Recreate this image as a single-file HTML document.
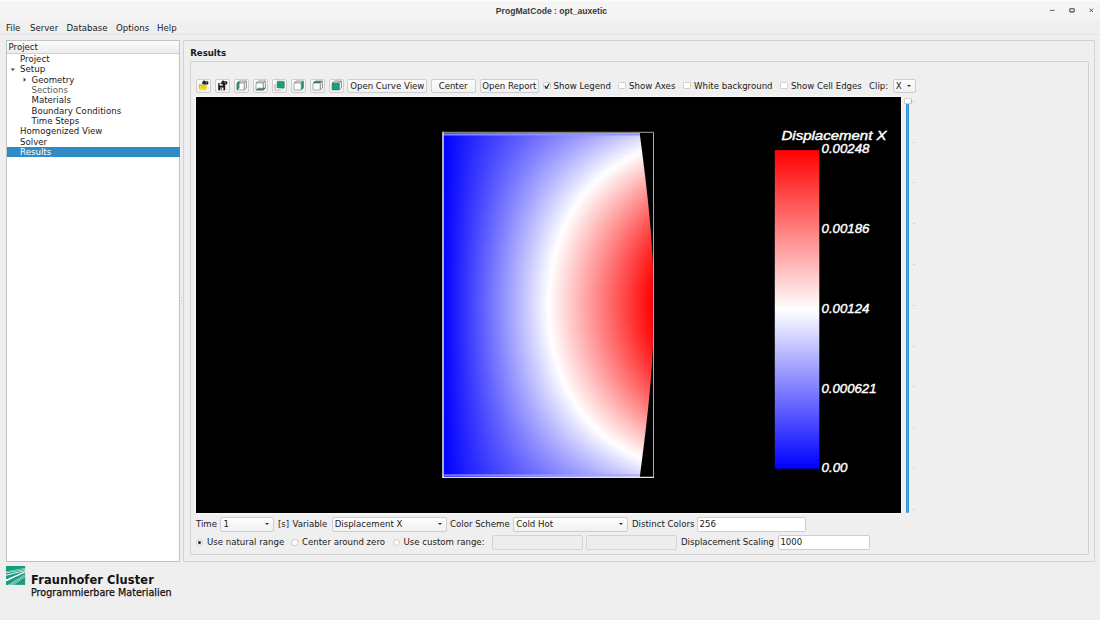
<!DOCTYPE html>
<html><head><meta charset="utf-8"><title>ProgMatCode : opt_auxetic</title>
<style>
*{box-sizing:border-box;margin:0;padding:0}
html,body{width:1100px;height:620px;overflow:hidden;background:#efefef}
body{position:relative;font-family:"DejaVu Sans","Liberation Sans",sans-serif;font-size:8.6px;color:#1a1a1a;line-height:10.33px}
.a{position:absolute;white-space:nowrap}
#titlebar{left:0;top:0;width:1100px;height:21.8px;background:linear-gradient(#fdfdfd 0,#f5f5f5 12%,#f3f3f3);border-bottom:1.8px solid #b4b4b4}
#title{left:1.5px;width:1100px;top:6.1px;text-align:center;font-family:"Liberation Sans","DejaVu Sans",sans-serif;font-weight:bold;font-size:8.6px;color:#3a3a3a}
#menubar{left:0;top:21px;width:1100px;height:13px;background:#efefef}
.m{top:23px}
#tree{left:6px;top:40px;width:174.4px;height:522px;background:#fff;border:1px solid #c2c2c2}
#thead{left:7px;top:41px;width:172px;height:12.5px;background:linear-gradient(#fdfdfd,#ececec);border-bottom:1px solid #cfcfcf}
.t{height:10.33px}
#sel{left:7px;top:146.7px;width:173px;height:10.7px;background:#308cc6}
#rpanel{left:182.7px;top:39.8px;width:912.8px;height:522.6px;border:1px solid #d2d2d2;border-radius:1px}
#gbox{left:189.7px;top:60.8px;width:899.1px;height:494.6px;border:1px solid #d2d2d2;border-radius:1px}
#view{left:195.8px;top:97px;width:705px;height:415.8px;background:#000;box-shadow:0 0 0 1.3px #f9f9f9}
.btn{border:1px solid #cecece;border-radius:2px;background:linear-gradient(#fcfcfc,#f0f0f0);height:13.8px;top:79.2px;text-align:center;line-height:12.7px}
.ib{width:15px;padding:0;line-height:0;overflow:hidden}.ib svg{position:absolute;left:-1px;top:-1px}
.cb{width:7.6px;height:7.8px;border:1px solid #cfcfcf;border-radius:1.5px;background:#fff;top:81.7px}
.lb{top:80.8px}
.combo{border:1px solid #cdcdcd;border-radius:2px;background:linear-gradient(#fdfdfd,#f1f1f1);height:15.1px;line-height:13.3px;padding-left:2.2px}
.inp{border:1px solid #cdcdcd;border-radius:2px;background:#fff;height:15.1px;line-height:13.3px;padding-left:1.2px}
.dis{background:#ededed;border-color:#d4d4d4}
.arr{position:absolute;right:3.6px;top:5.6px;width:0;height:0;border-left:2.7px solid transparent;border-right:2.7px solid transparent;border-top:2.7px solid #2e2e2e}
.rd{width:7.8px;height:7.8px;border:1px solid #c8c8c8;border-radius:50%;background:#fff}
.r1{top:519px}
.r2{top:537.4px}
</style></head><body>
<div class="a" id="titlebar"></div>
<div class="a" id="title">ProgMatCode : opt_auxetic</div>
<!--WB--><svg class="a" style="left:1040px;top:0" width="60" height="21" viewBox="0 0 60 21">
<path d="M9.9 10.4h4.8" stroke="#555" stroke-width=".9" fill="none"/>
<rect x="29.8" y="8.7" width="4.4" height="3.2" rx=".6" fill="none" stroke="#444" stroke-width="1.1"/>
<path d="M49.6 8.6l3.4 3.4M53 8.6l-3.4 3.4" stroke="#444" stroke-width=".9" fill="none"/>
</svg><!--/WB-->
<div class="a" id="menubar"></div>
<div class="a m" style="left:6px">File</div>
<div class="a m" style="left:30px">Server</div>
<div class="a m" style="left:66.5px">Database</div>
<div class="a m" style="left:116px">Options</div>
<div class="a m" style="left:157px">Help</div>

<div class="a" id="tree"></div>
<div class="a" id="thead"></div>
<div class="a" style="left:8.5px;top:42px">Project</div>
<div class="a" id="sel"></div>
<div class="a t" style="left:20.1px;top:54px">Project</div>
<div class="a t" style="left:20.1px;top:64.3px">Setup</div>
<div class="a t" style="left:31.5px;top:74.6px">Geometry</div>
<div class="a t" style="left:31.5px;top:85px;color:#5c5c5c">Sections</div>
<div class="a t" style="left:31.5px;top:95.3px">Materials</div>
<div class="a t" style="left:31.5px;top:105.6px">Boundary Conditions</div>
<div class="a t" style="left:31.5px;top:116px">Time Steps</div>
<div class="a t" style="left:20.1px;top:126.3px">Homogenized View</div>
<div class="a t" style="left:20.1px;top:136.6px">Solver</div>
<div class="a t" style="left:20.1px;top:147px;color:#fff">Results</div>

<!--EXTRA--><div class="a" style="left:0;top:34px;width:1100px;height:1px;background:#e4e4e4"></div>
<svg class="a" style="left:9px;top:65.5px" width="8" height="8" viewBox="0 0 8 8"><path d="M1.6 2.6h4.4L3.8 5z" fill="#444"/></svg>
<svg class="a" style="left:20.6px;top:76px" width="8" height="8" viewBox="0 0 8 8"><path d="M2.6 1.6v4.4L5 3.8z" fill="#444"/></svg>
<div class="a" style="left:181.3px;top:297px;width:1px;height:1px;background:#c4c4c4;box-shadow:0 3px #c4c4c4,0 6px #c4c4c4"></div>
<!--/EXTRA-->
<div class="a" id="rpanel"></div>
<div class="a" style="left:190.2px;top:47.8px;font-weight:bold">Results</div>
<div class="a" id="gbox"></div>
<div class="a" id="view"></div>
<!--VIEW--><svg class="a" style="left:196px;top:97px" width="705" height="416" viewBox="196 97 705 416">
<defs><linearGradient id="g0"><stop offset="0" stop-color="#0000ff"/><stop offset="0.125" stop-color="#2121ff"/><stop offset="0.25" stop-color="#3d3dff"/><stop offset="0.375" stop-color="#5757ff"/><stop offset="0.5" stop-color="#7070ff"/><stop offset="0.625" stop-color="#8989ff"/><stop offset="0.75" stop-color="#a0a0ff"/><stop offset="0.875" stop-color="#b8b8ff"/><stop offset="1" stop-color="#cfcfff"/></linearGradient><linearGradient id="g1"><stop offset="0" stop-color="#0000ff"/><stop offset="0.125" stop-color="#2121ff"/><stop offset="0.25" stop-color="#3e3eff"/><stop offset="0.375" stop-color="#5959ff"/><stop offset="0.5" stop-color="#7373ff"/><stop offset="0.625" stop-color="#8c8cff"/><stop offset="0.75" stop-color="#a4a4ff"/><stop offset="0.875" stop-color="#bdbdff"/><stop offset="1" stop-color="#d4d4ff"/></linearGradient><linearGradient id="g2"><stop offset="0" stop-color="#0000ff"/><stop offset="0.125" stop-color="#2222ff"/><stop offset="0.25" stop-color="#3f3fff"/><stop offset="0.375" stop-color="#5b5bff"/><stop offset="0.5" stop-color="#7575ff"/><stop offset="0.625" stop-color="#8f8fff"/><stop offset="0.75" stop-color="#a9a9ff"/><stop offset="0.875" stop-color="#c1c1ff"/><stop offset="1" stop-color="#dadaff"/></linearGradient><linearGradient id="g3"><stop offset="0" stop-color="#0000ff"/><stop offset="0.125" stop-color="#2323ff"/><stop offset="0.25" stop-color="#4040ff"/><stop offset="0.375" stop-color="#5d5dff"/><stop offset="0.5" stop-color="#7878ff"/><stop offset="0.625" stop-color="#9393ff"/><stop offset="0.75" stop-color="#adadff"/><stop offset="0.875" stop-color="#c6c6ff"/><stop offset="1" stop-color="#e0e0ff"/></linearGradient><linearGradient id="g4"><stop offset="0" stop-color="#0000ff"/><stop offset="0.125" stop-color="#2323ff"/><stop offset="0.25" stop-color="#4141ff"/><stop offset="0.375" stop-color="#5e5eff"/><stop offset="0.5" stop-color="#7a7aff"/><stop offset="0.625" stop-color="#9696ff"/><stop offset="0.75" stop-color="#b1b1ff"/><stop offset="0.875" stop-color="#cbcbff"/><stop offset="1" stop-color="#e5e5ff"/></linearGradient><linearGradient id="g5"><stop offset="0" stop-color="#0000ff"/><stop offset="0.125" stop-color="#2424ff"/><stop offset="0.25" stop-color="#4343ff"/><stop offset="0.375" stop-color="#6060ff"/><stop offset="0.5" stop-color="#7d7dff"/><stop offset="0.625" stop-color="#9999ff"/><stop offset="0.75" stop-color="#b5b5ff"/><stop offset="0.875" stop-color="#d0d0ff"/><stop offset="1" stop-color="#ebebff"/></linearGradient><linearGradient id="g6"><stop offset="0" stop-color="#0000ff"/><stop offset="0.125" stop-color="#2424ff"/><stop offset="0.25" stop-color="#4444ff"/><stop offset="0.375" stop-color="#6262ff"/><stop offset="0.5" stop-color="#8080ff"/><stop offset="0.625" stop-color="#9c9cff"/><stop offset="0.75" stop-color="#b9b9ff"/><stop offset="0.875" stop-color="#d5d5ff"/><stop offset="1" stop-color="#f0f0ff"/></linearGradient><linearGradient id="g7"><stop offset="0" stop-color="#0000ff"/><stop offset="0.125" stop-color="#2525ff"/><stop offset="0.25" stop-color="#4545ff"/><stop offset="0.375" stop-color="#6464ff"/><stop offset="0.5" stop-color="#8282ff"/><stop offset="0.625" stop-color="#a0a0ff"/><stop offset="0.75" stop-color="#bdbdff"/><stop offset="0.875" stop-color="#d9d9ff"/><stop offset="1" stop-color="#f6f6ff"/></linearGradient><linearGradient id="g8"><stop offset="0" stop-color="#0000ff"/><stop offset="0.125" stop-color="#2525ff"/><stop offset="0.25" stop-color="#4646ff"/><stop offset="0.375" stop-color="#6666ff"/><stop offset="0.5" stop-color="#8585ff"/><stop offset="0.625" stop-color="#a3a3ff"/><stop offset="0.75" stop-color="#c1c1ff"/><stop offset="0.875" stop-color="#dedeff"/><stop offset="1" stop-color="#fbfbff"/></linearGradient><linearGradient id="g9"><stop offset="0" stop-color="#0000ff"/><stop offset="0.125" stop-color="#2626ff"/><stop offset="0.25" stop-color="#4747ff"/><stop offset="0.375" stop-color="#6868ff"/><stop offset="0.5" stop-color="#8787ff"/><stop offset="0.625" stop-color="#a6a6ff"/><stop offset="0.75" stop-color="#c5c5ff"/><stop offset="0.875" stop-color="#e3e3ff"/><stop offset="0.9926" stop-color="#ffffff"/><stop offset="1" stop-color="#fffdfd"/></linearGradient><linearGradient id="g10"><stop offset="0" stop-color="#0000ff"/><stop offset="0.125" stop-color="#2626ff"/><stop offset="0.25" stop-color="#4848ff"/><stop offset="0.375" stop-color="#6969ff"/><stop offset="0.5" stop-color="#8a8aff"/><stop offset="0.625" stop-color="#a9a9ff"/><stop offset="0.75" stop-color="#c9c9ff"/><stop offset="0.875" stop-color="#e8e8ff"/><stop offset="0.9703" stop-color="#ffffff"/><stop offset="1" stop-color="#fff8f8"/></linearGradient><linearGradient id="g11"><stop offset="0" stop-color="#0000ff"/><stop offset="0.125" stop-color="#2727ff"/><stop offset="0.25" stop-color="#4a4aff"/><stop offset="0.375" stop-color="#6b6bff"/><stop offset="0.5" stop-color="#8c8cff"/><stop offset="0.625" stop-color="#adadff"/><stop offset="0.75" stop-color="#cdcdff"/><stop offset="0.875" stop-color="#ececff"/><stop offset="0.9492" stop-color="#ffffff"/><stop offset="1" stop-color="#fff2f2"/></linearGradient><linearGradient id="g12"><stop offset="0" stop-color="#0000ff"/><stop offset="0.125" stop-color="#2727ff"/><stop offset="0.25" stop-color="#4b4bff"/><stop offset="0.375" stop-color="#6d6dff"/><stop offset="0.5" stop-color="#8f8fff"/><stop offset="0.625" stop-color="#b0b0ff"/><stop offset="0.75" stop-color="#d1d1ff"/><stop offset="0.875" stop-color="#f1f1ff"/><stop offset="0.9291" stop-color="#ffffff"/><stop offset="1" stop-color="#ffeded"/></linearGradient><linearGradient id="g13"><stop offset="0" stop-color="#0000ff"/><stop offset="0.125" stop-color="#2828ff"/><stop offset="0.25" stop-color="#4c4cff"/><stop offset="0.375" stop-color="#6f6fff"/><stop offset="0.5" stop-color="#9191ff"/><stop offset="0.625" stop-color="#b3b3ff"/><stop offset="0.75" stop-color="#d5d5ff"/><stop offset="0.875" stop-color="#f6f6ff"/><stop offset="0.9101" stop-color="#ffffff"/><stop offset="1" stop-color="#ffe7e7"/></linearGradient><linearGradient id="g14"><stop offset="0" stop-color="#0000ff"/><stop offset="0.125" stop-color="#2828ff"/><stop offset="0.25" stop-color="#4d4dff"/><stop offset="0.375" stop-color="#7171ff"/><stop offset="0.5" stop-color="#9494ff"/><stop offset="0.625" stop-color="#b6b6ff"/><stop offset="0.75" stop-color="#d9d9ff"/><stop offset="0.875" stop-color="#fafaff"/><stop offset="0.8921" stop-color="#ffffff"/><stop offset="1" stop-color="#ffe2e2"/></linearGradient><linearGradient id="g15"><stop offset="0" stop-color="#0000ff"/><stop offset="0.125" stop-color="#2828ff"/><stop offset="0.25" stop-color="#4e4eff"/><stop offset="0.375" stop-color="#7272ff"/><stop offset="0.5" stop-color="#9696ff"/><stop offset="0.625" stop-color="#babaff"/><stop offset="0.75" stop-color="#dcdcff"/><stop offset="0.8749" stop-color="#ffffff"/><stop offset="0.875" stop-color="#ffffff"/><stop offset="1" stop-color="#ffdddd"/></linearGradient><linearGradient id="g16"><stop offset="0" stop-color="#0000ff"/><stop offset="0.125" stop-color="#2929ff"/><stop offset="0.25" stop-color="#4f4fff"/><stop offset="0.375" stop-color="#7474ff"/><stop offset="0.5" stop-color="#9999ff"/><stop offset="0.625" stop-color="#bdbdff"/><stop offset="0.75" stop-color="#e0e0ff"/><stop offset="0.8585" stop-color="#ffffff"/><stop offset="0.875" stop-color="#fffafa"/><stop offset="1" stop-color="#ffd7d7"/></linearGradient><linearGradient id="g17"><stop offset="0" stop-color="#0000ff"/><stop offset="0.125" stop-color="#2929ff"/><stop offset="0.25" stop-color="#5050ff"/><stop offset="0.375" stop-color="#7676ff"/><stop offset="0.5" stop-color="#9b9bff"/><stop offset="0.625" stop-color="#c0c0ff"/><stop offset="0.75" stop-color="#e4e4ff"/><stop offset="0.843" stop-color="#ffffff"/><stop offset="0.875" stop-color="#fff6f6"/><stop offset="1" stop-color="#ffd2d2"/></linearGradient><linearGradient id="g18"><stop offset="0" stop-color="#0000ff"/><stop offset="0.125" stop-color="#2a2aff"/><stop offset="0.25" stop-color="#5151ff"/><stop offset="0.375" stop-color="#7878ff"/><stop offset="0.5" stop-color="#9e9eff"/><stop offset="0.625" stop-color="#c3c3ff"/><stop offset="0.75" stop-color="#e8e8ff"/><stop offset="0.8281" stop-color="#ffffff"/><stop offset="0.875" stop-color="#fff1f1"/><stop offset="1" stop-color="#ffcdcd"/></linearGradient><linearGradient id="g19"><stop offset="0" stop-color="#0000ff"/><stop offset="0.125" stop-color="#2a2aff"/><stop offset="0.25" stop-color="#5252ff"/><stop offset="0.375" stop-color="#7979ff"/><stop offset="0.5" stop-color="#a0a0ff"/><stop offset="0.625" stop-color="#c6c6ff"/><stop offset="0.75" stop-color="#ececff"/><stop offset="0.8139" stop-color="#ffffff"/><stop offset="0.875" stop-color="#ffeded"/><stop offset="1" stop-color="#ffc7c7"/></linearGradient><linearGradient id="g20"><stop offset="0" stop-color="#0000ff"/><stop offset="0.125" stop-color="#2b2bff"/><stop offset="0.25" stop-color="#5353ff"/><stop offset="0.375" stop-color="#7b7bff"/><stop offset="0.5" stop-color="#a2a2ff"/><stop offset="0.625" stop-color="#c9c9ff"/><stop offset="0.75" stop-color="#f0f0ff"/><stop offset="0.8003" stop-color="#ffffff"/><stop offset="0.875" stop-color="#ffe8e8"/><stop offset="1" stop-color="#ffc2c2"/></linearGradient><linearGradient id="g21"><stop offset="0" stop-color="#0000ff"/><stop offset="0.125" stop-color="#2b2bff"/><stop offset="0.25" stop-color="#5555ff"/><stop offset="0.375" stop-color="#7d7dff"/><stop offset="0.5" stop-color="#a5a5ff"/><stop offset="0.625" stop-color="#ccccff"/><stop offset="0.75" stop-color="#f3f3ff"/><stop offset="0.7873" stop-color="#ffffff"/><stop offset="0.875" stop-color="#ffe4e4"/><stop offset="1" stop-color="#ffbdbd"/></linearGradient><linearGradient id="g22"><stop offset="0" stop-color="#0000ff"/><stop offset="0.125" stop-color="#2c2cff"/><stop offset="0.25" stop-color="#5656ff"/><stop offset="0.375" stop-color="#7f7fff"/><stop offset="0.5" stop-color="#a7a7ff"/><stop offset="0.625" stop-color="#cfcfff"/><stop offset="0.75" stop-color="#f7f7ff"/><stop offset="0.7749" stop-color="#ffffff"/><stop offset="0.875" stop-color="#ffdfdf"/><stop offset="1" stop-color="#ffb8b8"/></linearGradient><linearGradient id="g23"><stop offset="0" stop-color="#0000ff"/><stop offset="0.125" stop-color="#2c2cff"/><stop offset="0.25" stop-color="#5757ff"/><stop offset="0.375" stop-color="#8080ff"/><stop offset="0.5" stop-color="#a9a9ff"/><stop offset="0.625" stop-color="#d2d2ff"/><stop offset="0.75" stop-color="#fbfbff"/><stop offset="0.763" stop-color="#ffffff"/><stop offset="0.875" stop-color="#ffdbdb"/><stop offset="1" stop-color="#ffb3b3"/></linearGradient><linearGradient id="g24"><stop offset="0" stop-color="#0000ff"/><stop offset="0.125" stop-color="#2d2dff"/><stop offset="0.25" stop-color="#5858ff"/><stop offset="0.375" stop-color="#8282ff"/><stop offset="0.5" stop-color="#acacff"/><stop offset="0.625" stop-color="#d5d5ff"/><stop offset="0.75" stop-color="#fefeff"/><stop offset="0.7516" stop-color="#ffffff"/><stop offset="0.875" stop-color="#ffd7d7"/><stop offset="1" stop-color="#ffaeae"/></linearGradient><linearGradient id="g25"><stop offset="0" stop-color="#0000ff"/><stop offset="0.125" stop-color="#2d2dff"/><stop offset="0.25" stop-color="#5959ff"/><stop offset="0.375" stop-color="#8484ff"/><stop offset="0.5" stop-color="#aeaeff"/><stop offset="0.625" stop-color="#d8d8ff"/><stop offset="0.7407" stop-color="#ffffff"/><stop offset="0.75" stop-color="#fffcfc"/><stop offset="0.875" stop-color="#ffd2d2"/><stop offset="1" stop-color="#ffa9a9"/></linearGradient><linearGradient id="g26"><stop offset="0" stop-color="#0000ff"/><stop offset="0.125" stop-color="#2e2eff"/><stop offset="0.25" stop-color="#5a5aff"/><stop offset="0.375" stop-color="#8585ff"/><stop offset="0.5" stop-color="#b0b0ff"/><stop offset="0.625" stop-color="#dbdbff"/><stop offset="0.7302" stop-color="#ffffff"/><stop offset="0.75" stop-color="#fff8f8"/><stop offset="0.875" stop-color="#ffcece"/><stop offset="1" stop-color="#ffa4a4"/></linearGradient><linearGradient id="g27"><stop offset="0" stop-color="#0000ff"/><stop offset="0.125" stop-color="#2e2eff"/><stop offset="0.25" stop-color="#5b5bff"/><stop offset="0.375" stop-color="#8787ff"/><stop offset="0.5" stop-color="#b3b3ff"/><stop offset="0.625" stop-color="#dedeff"/><stop offset="0.7201" stop-color="#ffffff"/><stop offset="0.75" stop-color="#fff5f5"/><stop offset="0.875" stop-color="#ffcaca"/><stop offset="1" stop-color="#ff9f9f"/></linearGradient><linearGradient id="g28"><stop offset="0" stop-color="#0000ff"/><stop offset="0.125" stop-color="#2f2fff"/><stop offset="0.25" stop-color="#5c5cff"/><stop offset="0.375" stop-color="#8989ff"/><stop offset="0.5" stop-color="#b5b5ff"/><stop offset="0.625" stop-color="#e1e1ff"/><stop offset="0.7104" stop-color="#ffffff"/><stop offset="0.75" stop-color="#fff1f1"/><stop offset="0.875" stop-color="#ffc6c6"/><stop offset="1" stop-color="#ff9a9a"/></linearGradient><linearGradient id="g29"><stop offset="0" stop-color="#0000ff"/><stop offset="0.125" stop-color="#2f2fff"/><stop offset="0.25" stop-color="#5d5dff"/><stop offset="0.375" stop-color="#8a8aff"/><stop offset="0.5" stop-color="#b7b7ff"/><stop offset="0.625" stop-color="#e4e4ff"/><stop offset="0.7011" stop-color="#ffffff"/><stop offset="0.75" stop-color="#ffeeee"/><stop offset="0.875" stop-color="#ffc1c1"/><stop offset="1" stop-color="#ff9595"/></linearGradient><linearGradient id="g30"><stop offset="0" stop-color="#0000ff"/><stop offset="0.125" stop-color="#3030ff"/><stop offset="0.25" stop-color="#5e5eff"/><stop offset="0.375" stop-color="#8c8cff"/><stop offset="0.5" stop-color="#b9b9ff"/><stop offset="0.625" stop-color="#e7e7ff"/><stop offset="0.6922" stop-color="#ffffff"/><stop offset="0.75" stop-color="#ffeaea"/><stop offset="0.875" stop-color="#ffbdbd"/><stop offset="1" stop-color="#ff9090"/></linearGradient><linearGradient id="g31"><stop offset="0" stop-color="#0000ff"/><stop offset="0.125" stop-color="#3030ff"/><stop offset="0.25" stop-color="#5f5fff"/><stop offset="0.375" stop-color="#8e8eff"/><stop offset="0.5" stop-color="#bcbcff"/><stop offset="0.625" stop-color="#eaeaff"/><stop offset="0.6836" stop-color="#ffffff"/><stop offset="0.75" stop-color="#ffe7e7"/><stop offset="0.875" stop-color="#ffb9b9"/><stop offset="1" stop-color="#ff8c8c"/></linearGradient><linearGradient id="g32"><stop offset="0" stop-color="#0000ff"/><stop offset="0.125" stop-color="#3131ff"/><stop offset="0.25" stop-color="#6060ff"/><stop offset="0.375" stop-color="#8f8fff"/><stop offset="0.5" stop-color="#bebeff"/><stop offset="0.625" stop-color="#ececff"/><stop offset="0.6753" stop-color="#ffffff"/><stop offset="0.75" stop-color="#ffe3e3"/><stop offset="0.875" stop-color="#ffb5b5"/><stop offset="1" stop-color="#ff8787"/></linearGradient><linearGradient id="g33"><stop offset="0" stop-color="#0000ff"/><stop offset="0.125" stop-color="#3131ff"/><stop offset="0.25" stop-color="#6161ff"/><stop offset="0.375" stop-color="#9191ff"/><stop offset="0.5" stop-color="#c0c0ff"/><stop offset="0.625" stop-color="#efefff"/><stop offset="0.6673" stop-color="#ffffff"/><stop offset="0.75" stop-color="#ffe0e0"/><stop offset="0.875" stop-color="#ffb1b1"/><stop offset="1" stop-color="#ff8282"/></linearGradient><linearGradient id="g34"><stop offset="0" stop-color="#0000ff"/><stop offset="0.125" stop-color="#3232ff"/><stop offset="0.25" stop-color="#6262ff"/><stop offset="0.375" stop-color="#9292ff"/><stop offset="0.5" stop-color="#c2c2ff"/><stop offset="0.625" stop-color="#f2f2ff"/><stop offset="0.6596" stop-color="#ffffff"/><stop offset="0.75" stop-color="#ffdddd"/><stop offset="0.875" stop-color="#ffadad"/><stop offset="1" stop-color="#ff7e7e"/></linearGradient><linearGradient id="g35"><stop offset="0" stop-color="#0000ff"/><stop offset="0.125" stop-color="#3232ff"/><stop offset="0.25" stop-color="#6363ff"/><stop offset="0.375" stop-color="#9494ff"/><stop offset="0.5" stop-color="#c4c4ff"/><stop offset="0.625" stop-color="#f4f4ff"/><stop offset="0.6522" stop-color="#ffffff"/><stop offset="0.75" stop-color="#ffd9d9"/><stop offset="0.875" stop-color="#ffa9a9"/><stop offset="1" stop-color="#ff7979"/></linearGradient><linearGradient id="g36"><stop offset="0" stop-color="#0000ff"/><stop offset="0.125" stop-color="#3232ff"/><stop offset="0.25" stop-color="#6464ff"/><stop offset="0.375" stop-color="#9595ff"/><stop offset="0.5" stop-color="#c6c6ff"/><stop offset="0.625" stop-color="#f7f7ff"/><stop offset="0.6451" stop-color="#ffffff"/><stop offset="0.75" stop-color="#ffd6d6"/><stop offset="0.875" stop-color="#ffa6a6"/><stop offset="1" stop-color="#ff7575"/></linearGradient><linearGradient id="g37"><stop offset="0" stop-color="#0000ff"/><stop offset="0.125" stop-color="#3333ff"/><stop offset="0.25" stop-color="#6565ff"/><stop offset="0.375" stop-color="#9797ff"/><stop offset="0.5" stop-color="#c8c8ff"/><stop offset="0.625" stop-color="#fafaff"/><stop offset="0.6383" stop-color="#ffffff"/><stop offset="0.75" stop-color="#ffd3d3"/><stop offset="0.875" stop-color="#ffa2a2"/><stop offset="1" stop-color="#ff7171"/></linearGradient><linearGradient id="g38"><stop offset="0" stop-color="#0000ff"/><stop offset="0.125" stop-color="#3333ff"/><stop offset="0.25" stop-color="#6666ff"/><stop offset="0.375" stop-color="#9898ff"/><stop offset="0.5" stop-color="#cacaff"/><stop offset="0.625" stop-color="#fcfcff"/><stop offset="0.6316" stop-color="#ffffff"/><stop offset="0.75" stop-color="#ffd0d0"/><stop offset="0.875" stop-color="#ff9e9e"/><stop offset="1" stop-color="#ff6c6c"/></linearGradient><linearGradient id="g39"><stop offset="0" stop-color="#0000ff"/><stop offset="0.125" stop-color="#3434ff"/><stop offset="0.25" stop-color="#6767ff"/><stop offset="0.375" stop-color="#9a9aff"/><stop offset="0.5" stop-color="#ccccff"/><stop offset="0.625" stop-color="#ffffff"/><stop offset="0.6252" stop-color="#ffffff"/><stop offset="0.75" stop-color="#ffcdcd"/><stop offset="0.875" stop-color="#ff9a9a"/><stop offset="1" stop-color="#ff6868"/></linearGradient><linearGradient id="g40"><stop offset="0" stop-color="#0000ff"/><stop offset="0.125" stop-color="#3434ff"/><stop offset="0.25" stop-color="#6868ff"/><stop offset="0.375" stop-color="#9b9bff"/><stop offset="0.5" stop-color="#ceceff"/><stop offset="0.6191" stop-color="#ffffff"/><stop offset="0.625" stop-color="#fffdfd"/><stop offset="0.75" stop-color="#ffcaca"/><stop offset="0.875" stop-color="#ff9797"/><stop offset="1" stop-color="#ff6464"/></linearGradient><linearGradient id="g41"><stop offset="0" stop-color="#0000ff"/><stop offset="0.125" stop-color="#3535ff"/><stop offset="0.25" stop-color="#6969ff"/><stop offset="0.375" stop-color="#9d9dff"/><stop offset="0.5" stop-color="#d0d0ff"/><stop offset="0.6132" stop-color="#ffffff"/><stop offset="0.625" stop-color="#fffafa"/><stop offset="0.75" stop-color="#ffc7c7"/><stop offset="0.875" stop-color="#ff9393"/><stop offset="1" stop-color="#ff6060"/></linearGradient><linearGradient id="g42"><stop offset="0" stop-color="#0000ff"/><stop offset="0.125" stop-color="#3535ff"/><stop offset="0.25" stop-color="#6a6aff"/><stop offset="0.375" stop-color="#9e9eff"/><stop offset="0.5" stop-color="#d2d2ff"/><stop offset="0.6074" stop-color="#ffffff"/><stop offset="0.625" stop-color="#fff8f8"/><stop offset="0.75" stop-color="#ffc4c4"/><stop offset="0.875" stop-color="#ff9090"/><stop offset="1" stop-color="#ff5c5c"/></linearGradient><linearGradient id="g43"><stop offset="0" stop-color="#0000ff"/><stop offset="0.125" stop-color="#3636ff"/><stop offset="0.25" stop-color="#6b6bff"/><stop offset="0.375" stop-color="#9f9fff"/><stop offset="0.5" stop-color="#d4d4ff"/><stop offset="0.6019" stop-color="#ffffff"/><stop offset="0.625" stop-color="#fff5f5"/><stop offset="0.75" stop-color="#ffc1c1"/><stop offset="0.875" stop-color="#ff8c8c"/><stop offset="1" stop-color="#ff5858"/></linearGradient><linearGradient id="g44"><stop offset="0" stop-color="#0000ff"/><stop offset="0.125" stop-color="#3636ff"/><stop offset="0.25" stop-color="#6b6bff"/><stop offset="0.375" stop-color="#a1a1ff"/><stop offset="0.5" stop-color="#d6d6ff"/><stop offset="0.5966" stop-color="#ffffff"/><stop offset="0.625" stop-color="#fff3f3"/><stop offset="0.75" stop-color="#ffbebe"/><stop offset="0.875" stop-color="#ff8989"/><stop offset="1" stop-color="#ff5454"/></linearGradient><linearGradient id="g45"><stop offset="0" stop-color="#0000ff"/><stop offset="0.125" stop-color="#3636ff"/><stop offset="0.25" stop-color="#6c6cff"/><stop offset="0.375" stop-color="#a2a2ff"/><stop offset="0.5" stop-color="#d8d8ff"/><stop offset="0.5915" stop-color="#ffffff"/><stop offset="0.625" stop-color="#fff1f1"/><stop offset="0.75" stop-color="#ffbbbb"/><stop offset="0.875" stop-color="#ff8686"/><stop offset="1" stop-color="#ff5050"/></linearGradient><linearGradient id="g46"><stop offset="0" stop-color="#0000ff"/><stop offset="0.125" stop-color="#3737ff"/><stop offset="0.25" stop-color="#6d6dff"/><stop offset="0.375" stop-color="#a3a3ff"/><stop offset="0.5" stop-color="#dadaff"/><stop offset="0.5865" stop-color="#ffffff"/><stop offset="0.625" stop-color="#ffeeee"/><stop offset="0.75" stop-color="#ffb8b8"/><stop offset="0.875" stop-color="#ff8282"/><stop offset="1" stop-color="#ff4c4c"/></linearGradient><linearGradient id="g47"><stop offset="0" stop-color="#0000ff"/><stop offset="0.125" stop-color="#3737ff"/><stop offset="0.25" stop-color="#6e6eff"/><stop offset="0.375" stop-color="#a5a5ff"/><stop offset="0.5" stop-color="#dbdbff"/><stop offset="0.5818" stop-color="#ffffff"/><stop offset="0.625" stop-color="#ffecec"/><stop offset="0.75" stop-color="#ffb6b6"/><stop offset="0.875" stop-color="#ff7f7f"/><stop offset="1" stop-color="#ff4949"/></linearGradient><linearGradient id="g48"><stop offset="0" stop-color="#0000ff"/><stop offset="0.125" stop-color="#3838ff"/><stop offset="0.25" stop-color="#6f6fff"/><stop offset="0.375" stop-color="#a6a6ff"/><stop offset="0.5" stop-color="#ddddff"/><stop offset="0.5772" stop-color="#ffffff"/><stop offset="0.625" stop-color="#ffeaea"/><stop offset="0.75" stop-color="#ffb3b3"/><stop offset="0.875" stop-color="#ff7c7c"/><stop offset="1" stop-color="#ff4545"/></linearGradient><linearGradient id="g49"><stop offset="0" stop-color="#0000ff"/><stop offset="0.125" stop-color="#3838ff"/><stop offset="0.25" stop-color="#7070ff"/><stop offset="0.375" stop-color="#a7a7ff"/><stop offset="0.5" stop-color="#dfdfff"/><stop offset="0.5728" stop-color="#ffffff"/><stop offset="0.625" stop-color="#ffe8e8"/><stop offset="0.75" stop-color="#ffb0b0"/><stop offset="0.875" stop-color="#ff7979"/><stop offset="1" stop-color="#ff4242"/></linearGradient><linearGradient id="g50"><stop offset="0" stop-color="#0000ff"/><stop offset="0.125" stop-color="#3838ff"/><stop offset="0.25" stop-color="#7070ff"/><stop offset="0.375" stop-color="#a8a8ff"/><stop offset="0.5" stop-color="#e0e0ff"/><stop offset="0.5685" stop-color="#ffffff"/><stop offset="0.625" stop-color="#ffe6e6"/><stop offset="0.75" stop-color="#ffaeae"/><stop offset="0.875" stop-color="#ff7676"/><stop offset="1" stop-color="#ff3e3e"/></linearGradient><linearGradient id="g51"><stop offset="0" stop-color="#0000ff"/><stop offset="0.125" stop-color="#3939ff"/><stop offset="0.25" stop-color="#7171ff"/><stop offset="0.375" stop-color="#aaaaff"/><stop offset="0.5" stop-color="#e2e2ff"/><stop offset="0.5644" stop-color="#ffffff"/><stop offset="0.625" stop-color="#ffe4e4"/><stop offset="0.75" stop-color="#ffabab"/><stop offset="0.875" stop-color="#ff7373"/><stop offset="1" stop-color="#ff3b3b"/></linearGradient><linearGradient id="g52"><stop offset="0" stop-color="#0000ff"/><stop offset="0.125" stop-color="#3939ff"/><stop offset="0.25" stop-color="#7272ff"/><stop offset="0.375" stop-color="#ababff"/><stop offset="0.5" stop-color="#e4e4ff"/><stop offset="0.5605" stop-color="#ffffff"/><stop offset="0.625" stop-color="#ffe2e2"/><stop offset="0.75" stop-color="#ffa9a9"/><stop offset="0.875" stop-color="#ff7070"/><stop offset="1" stop-color="#ff3838"/></linearGradient><linearGradient id="g53"><stop offset="0" stop-color="#0000ff"/><stop offset="0.125" stop-color="#3939ff"/><stop offset="0.25" stop-color="#7373ff"/><stop offset="0.375" stop-color="#acacff"/><stop offset="0.5" stop-color="#e5e5ff"/><stop offset="0.5567" stop-color="#ffffff"/><stop offset="0.625" stop-color="#ffe0e0"/><stop offset="0.75" stop-color="#ffa7a7"/><stop offset="0.875" stop-color="#ff6e6e"/><stop offset="1" stop-color="#ff3535"/></linearGradient><linearGradient id="g54"><stop offset="0" stop-color="#0000ff"/><stop offset="0.125" stop-color="#3a3aff"/><stop offset="0.25" stop-color="#7373ff"/><stop offset="0.375" stop-color="#adadff"/><stop offset="0.5" stop-color="#e7e7ff"/><stop offset="0.553" stop-color="#ffffff"/><stop offset="0.625" stop-color="#ffdede"/><stop offset="0.75" stop-color="#ffa4a4"/><stop offset="0.875" stop-color="#ff6b6b"/><stop offset="1" stop-color="#ff3232"/></linearGradient><linearGradient id="g55"><stop offset="0" stop-color="#0000ff"/><stop offset="0.125" stop-color="#3a3aff"/><stop offset="0.25" stop-color="#7474ff"/><stop offset="0.375" stop-color="#aeaeff"/><stop offset="0.5" stop-color="#e8e8ff"/><stop offset="0.5495" stop-color="#ffffff"/><stop offset="0.625" stop-color="#ffdcdc"/><stop offset="0.75" stop-color="#ffa2a2"/><stop offset="0.875" stop-color="#ff6868"/><stop offset="1" stop-color="#ff2f2f"/></linearGradient><linearGradient id="g56"><stop offset="0" stop-color="#0000ff"/><stop offset="0.125" stop-color="#3b3bff"/><stop offset="0.25" stop-color="#7575ff"/><stop offset="0.375" stop-color="#afafff"/><stop offset="0.5" stop-color="#e9e9ff"/><stop offset="0.5462" stop-color="#ffffff"/><stop offset="0.625" stop-color="#ffdada"/><stop offset="0.75" stop-color="#ffa0a0"/><stop offset="0.875" stop-color="#ff6666"/><stop offset="1" stop-color="#ff2c2c"/></linearGradient><linearGradient id="g57"><stop offset="0" stop-color="#0000ff"/><stop offset="0.125" stop-color="#3b3bff"/><stop offset="0.25" stop-color="#7676ff"/><stop offset="0.375" stop-color="#b0b0ff"/><stop offset="0.5" stop-color="#ebebff"/><stop offset="0.543" stop-color="#ffffff"/><stop offset="0.625" stop-color="#ffd9d9"/><stop offset="0.75" stop-color="#ff9e9e"/><stop offset="0.875" stop-color="#ff6363"/><stop offset="1" stop-color="#ff2929"/></linearGradient><linearGradient id="g58"><stop offset="0" stop-color="#0000ff"/><stop offset="0.125" stop-color="#3b3bff"/><stop offset="0.25" stop-color="#7676ff"/><stop offset="0.375" stop-color="#b1b1ff"/><stop offset="0.5" stop-color="#ececff"/><stop offset="0.5399" stop-color="#ffffff"/><stop offset="0.625" stop-color="#ffd7d7"/><stop offset="0.75" stop-color="#ff9c9c"/><stop offset="0.875" stop-color="#ff6161"/><stop offset="1" stop-color="#ff2626"/></linearGradient><linearGradient id="g59"><stop offset="0" stop-color="#0000ff"/><stop offset="0.125" stop-color="#3b3bff"/><stop offset="0.25" stop-color="#7777ff"/><stop offset="0.375" stop-color="#b2b2ff"/><stop offset="0.5" stop-color="#ededff"/><stop offset="0.5369" stop-color="#ffffff"/><stop offset="0.625" stop-color="#ffd5d5"/><stop offset="0.75" stop-color="#ff9a9a"/><stop offset="0.875" stop-color="#ff5f5f"/><stop offset="1" stop-color="#ff2323"/></linearGradient><linearGradient id="g60"><stop offset="0" stop-color="#0000ff"/><stop offset="0.125" stop-color="#3c3cff"/><stop offset="0.25" stop-color="#7777ff"/><stop offset="0.375" stop-color="#b3b3ff"/><stop offset="0.5" stop-color="#efefff"/><stop offset="0.5341" stop-color="#ffffff"/><stop offset="0.625" stop-color="#ffd4d4"/><stop offset="0.75" stop-color="#ff9898"/><stop offset="0.875" stop-color="#ff5c5c"/><stop offset="1" stop-color="#ff2121"/></linearGradient><linearGradient id="g61"><stop offset="0" stop-color="#0000ff"/><stop offset="0.125" stop-color="#3c3cff"/><stop offset="0.25" stop-color="#7878ff"/><stop offset="0.375" stop-color="#b4b4ff"/><stop offset="0.5" stop-color="#f0f0ff"/><stop offset="0.5314" stop-color="#ffffff"/><stop offset="0.625" stop-color="#ffd2d2"/><stop offset="0.75" stop-color="#ff9696"/><stop offset="0.875" stop-color="#ff5a5a"/><stop offset="1" stop-color="#ff1e1e"/></linearGradient><linearGradient id="g62"><stop offset="0" stop-color="#0000ff"/><stop offset="0.125" stop-color="#3c3cff"/><stop offset="0.25" stop-color="#7979ff"/><stop offset="0.375" stop-color="#b5b5ff"/><stop offset="0.5" stop-color="#f1f1ff"/><stop offset="0.5288" stop-color="#ffffff"/><stop offset="0.625" stop-color="#ffd1d1"/><stop offset="0.75" stop-color="#ff9494"/><stop offset="0.875" stop-color="#ff5858"/><stop offset="1" stop-color="#ff1c1c"/></linearGradient><linearGradient id="g63"><stop offset="0" stop-color="#0000ff"/><stop offset="0.125" stop-color="#3d3dff"/><stop offset="0.25" stop-color="#7979ff"/><stop offset="0.375" stop-color="#b6b6ff"/><stop offset="0.5" stop-color="#f2f2ff"/><stop offset="0.5263" stop-color="#ffffff"/><stop offset="0.625" stop-color="#ffcfcf"/><stop offset="0.75" stop-color="#ff9393"/><stop offset="0.875" stop-color="#ff5656"/><stop offset="1" stop-color="#ff1a1a"/></linearGradient><linearGradient id="g64"><stop offset="0" stop-color="#0000ff"/><stop offset="0.125" stop-color="#3d3dff"/><stop offset="0.25" stop-color="#7a7aff"/><stop offset="0.375" stop-color="#b7b7ff"/><stop offset="0.5" stop-color="#f3f3ff"/><stop offset="0.524" stop-color="#ffffff"/><stop offset="0.625" stop-color="#ffcece"/><stop offset="0.75" stop-color="#ff9191"/><stop offset="0.875" stop-color="#ff5454"/><stop offset="1" stop-color="#ff1717"/></linearGradient><linearGradient id="g65"><stop offset="0" stop-color="#0000ff"/><stop offset="0.125" stop-color="#3d3dff"/><stop offset="0.25" stop-color="#7a7aff"/><stop offset="0.375" stop-color="#b7b7ff"/><stop offset="0.5" stop-color="#f4f4ff"/><stop offset="0.5218" stop-color="#ffffff"/><stop offset="0.625" stop-color="#ffcdcd"/><stop offset="0.75" stop-color="#ff9090"/><stop offset="0.875" stop-color="#ff5252"/><stop offset="1" stop-color="#ff1515"/></linearGradient><linearGradient id="g66"><stop offset="0" stop-color="#0000ff"/><stop offset="0.125" stop-color="#3d3dff"/><stop offset="0.25" stop-color="#7b7bff"/><stop offset="0.375" stop-color="#b8b8ff"/><stop offset="0.5" stop-color="#f5f5ff"/><stop offset="0.5197" stop-color="#ffffff"/><stop offset="0.625" stop-color="#ffcbcb"/><stop offset="0.75" stop-color="#ff8e8e"/><stop offset="0.875" stop-color="#ff5151"/><stop offset="1" stop-color="#ff1313"/></linearGradient><linearGradient id="g67"><stop offset="0" stop-color="#0000ff"/><stop offset="0.125" stop-color="#3e3eff"/><stop offset="0.25" stop-color="#7b7bff"/><stop offset="0.375" stop-color="#b9b9ff"/><stop offset="0.5" stop-color="#f6f6ff"/><stop offset="0.5177" stop-color="#ffffff"/><stop offset="0.625" stop-color="#ffcaca"/><stop offset="0.75" stop-color="#ff8d8d"/><stop offset="0.875" stop-color="#ff4f4f"/><stop offset="1" stop-color="#ff1111"/></linearGradient><linearGradient id="g68"><stop offset="0" stop-color="#0000ff"/><stop offset="0.125" stop-color="#3e3eff"/><stop offset="0.25" stop-color="#7c7cff"/><stop offset="0.375" stop-color="#b9b9ff"/><stop offset="0.5" stop-color="#f7f7ff"/><stop offset="0.5158" stop-color="#ffffff"/><stop offset="0.625" stop-color="#ffc9c9"/><stop offset="0.75" stop-color="#ff8b8b"/><stop offset="0.875" stop-color="#ff4d4d"/><stop offset="1" stop-color="#ff1010"/></linearGradient><linearGradient id="g69"><stop offset="0" stop-color="#0000ff"/><stop offset="0.125" stop-color="#3e3eff"/><stop offset="0.25" stop-color="#7c7cff"/><stop offset="0.375" stop-color="#babaff"/><stop offset="0.5" stop-color="#f8f8ff"/><stop offset="0.514" stop-color="#ffffff"/><stop offset="0.625" stop-color="#ffc8c8"/><stop offset="0.75" stop-color="#ff8a8a"/><stop offset="0.875" stop-color="#ff4c4c"/><stop offset="1" stop-color="#ff0e0e"/></linearGradient><linearGradient id="g70"><stop offset="0" stop-color="#0000ff"/><stop offset="0.125" stop-color="#3e3eff"/><stop offset="0.25" stop-color="#7c7cff"/><stop offset="0.375" stop-color="#bbbbff"/><stop offset="0.5" stop-color="#f9f9ff"/><stop offset="0.5124" stop-color="#ffffff"/><stop offset="0.625" stop-color="#ffc7c7"/><stop offset="0.75" stop-color="#ff8989"/><stop offset="0.875" stop-color="#ff4b4b"/><stop offset="1" stop-color="#ff0c0c"/></linearGradient><linearGradient id="g71"><stop offset="0" stop-color="#0000ff"/><stop offset="0.125" stop-color="#3e3eff"/><stop offset="0.25" stop-color="#7d7dff"/><stop offset="0.375" stop-color="#bbbbff"/><stop offset="0.5" stop-color="#fafaff"/><stop offset="0.5108" stop-color="#ffffff"/><stop offset="0.625" stop-color="#ffc6c6"/><stop offset="0.75" stop-color="#ff8888"/><stop offset="0.875" stop-color="#ff4949"/><stop offset="1" stop-color="#ff0b0b"/></linearGradient><linearGradient id="g72"><stop offset="0" stop-color="#0000ff"/><stop offset="0.125" stop-color="#3f3fff"/><stop offset="0.25" stop-color="#7d7dff"/><stop offset="0.375" stop-color="#bcbcff"/><stop offset="0.5" stop-color="#fafaff"/><stop offset="0.5094" stop-color="#ffffff"/><stop offset="0.625" stop-color="#ffc5c5"/><stop offset="0.75" stop-color="#ff8787"/><stop offset="0.875" stop-color="#ff4848"/><stop offset="1" stop-color="#ff0909"/></linearGradient><linearGradient id="g73"><stop offset="0" stop-color="#0000ff"/><stop offset="0.125" stop-color="#3f3fff"/><stop offset="0.25" stop-color="#7d7dff"/><stop offset="0.375" stop-color="#bcbcff"/><stop offset="0.5" stop-color="#fbfbff"/><stop offset="0.508" stop-color="#ffffff"/><stop offset="0.625" stop-color="#ffc4c4"/><stop offset="0.75" stop-color="#ff8686"/><stop offset="0.875" stop-color="#ff4747"/><stop offset="1" stop-color="#ff0808"/></linearGradient><linearGradient id="g74"><stop offset="0" stop-color="#0000ff"/><stop offset="0.125" stop-color="#3f3fff"/><stop offset="0.25" stop-color="#7e7eff"/><stop offset="0.375" stop-color="#bdbdff"/><stop offset="0.5" stop-color="#fcfcff"/><stop offset="0.5068" stop-color="#ffffff"/><stop offset="0.625" stop-color="#ffc4c4"/><stop offset="0.75" stop-color="#ff8585"/><stop offset="0.875" stop-color="#ff4646"/><stop offset="1" stop-color="#ff0707"/></linearGradient><linearGradient id="g75"><stop offset="0" stop-color="#0000ff"/><stop offset="0.125" stop-color="#3f3fff"/><stop offset="0.25" stop-color="#7e7eff"/><stop offset="0.375" stop-color="#bdbdff"/><stop offset="0.5" stop-color="#fcfcff"/><stop offset="0.5057" stop-color="#ffffff"/><stop offset="0.625" stop-color="#ffc3c3"/><stop offset="0.75" stop-color="#ff8484"/><stop offset="0.875" stop-color="#ff4545"/><stop offset="1" stop-color="#ff0606"/></linearGradient><linearGradient id="g76"><stop offset="0" stop-color="#0000ff"/><stop offset="0.125" stop-color="#3f3fff"/><stop offset="0.25" stop-color="#7e7eff"/><stop offset="0.375" stop-color="#bdbdff"/><stop offset="0.5" stop-color="#fdfdff"/><stop offset="0.5046" stop-color="#ffffff"/><stop offset="0.625" stop-color="#ffc2c2"/><stop offset="0.75" stop-color="#ff8383"/><stop offset="0.875" stop-color="#ff4444"/><stop offset="1" stop-color="#ff0505"/></linearGradient><linearGradient id="g77"><stop offset="0" stop-color="#0000ff"/><stop offset="0.125" stop-color="#3f3fff"/><stop offset="0.25" stop-color="#7f7fff"/><stop offset="0.375" stop-color="#bebeff"/><stop offset="0.5" stop-color="#fdfdff"/><stop offset="0.5037" stop-color="#ffffff"/><stop offset="0.625" stop-color="#ffc2c2"/><stop offset="0.75" stop-color="#ff8282"/><stop offset="0.875" stop-color="#ff4343"/><stop offset="1" stop-color="#ff0404"/></linearGradient><linearGradient id="g78"><stop offset="0" stop-color="#0000ff"/><stop offset="0.125" stop-color="#3f3fff"/><stop offset="0.25" stop-color="#7f7fff"/><stop offset="0.375" stop-color="#bebeff"/><stop offset="0.5" stop-color="#fefeff"/><stop offset="0.5029" stop-color="#ffffff"/><stop offset="0.625" stop-color="#ffc1c1"/><stop offset="0.75" stop-color="#ff8282"/><stop offset="0.875" stop-color="#ff4242"/><stop offset="1" stop-color="#ff0303"/></linearGradient><linearGradient id="g79"><stop offset="0" stop-color="#0000ff"/><stop offset="0.125" stop-color="#3f3fff"/><stop offset="0.25" stop-color="#7f7fff"/><stop offset="0.375" stop-color="#bebeff"/><stop offset="0.5" stop-color="#fefeff"/><stop offset="0.5022" stop-color="#ffffff"/><stop offset="0.625" stop-color="#ffc1c1"/><stop offset="0.75" stop-color="#ff8181"/><stop offset="0.875" stop-color="#ff4242"/><stop offset="1" stop-color="#ff0202"/></linearGradient><linearGradient id="g80"><stop offset="0" stop-color="#0000ff"/><stop offset="0.125" stop-color="#4040ff"/><stop offset="0.25" stop-color="#7f7fff"/><stop offset="0.375" stop-color="#bfbfff"/><stop offset="0.5" stop-color="#fefeff"/><stop offset="0.5016" stop-color="#ffffff"/><stop offset="0.625" stop-color="#ffc0c0"/><stop offset="0.75" stop-color="#ff8181"/><stop offset="0.875" stop-color="#ff4141"/><stop offset="1" stop-color="#ff0202"/></linearGradient><linearGradient id="g81"><stop offset="0" stop-color="#0000ff"/><stop offset="0.125" stop-color="#4040ff"/><stop offset="0.25" stop-color="#7f7fff"/><stop offset="0.375" stop-color="#bfbfff"/><stop offset="0.5" stop-color="#fefeff"/><stop offset="0.5011" stop-color="#ffffff"/><stop offset="0.625" stop-color="#ffc0c0"/><stop offset="0.75" stop-color="#ff8080"/><stop offset="0.875" stop-color="#ff4141"/><stop offset="1" stop-color="#ff0101"/></linearGradient><linearGradient id="g82"><stop offset="0" stop-color="#0000ff"/><stop offset="0.125" stop-color="#4040ff"/><stop offset="0.25" stop-color="#7f7fff"/><stop offset="0.375" stop-color="#bfbfff"/><stop offset="0.5" stop-color="#ffffff"/><stop offset="0.5007" stop-color="#ffffff"/><stop offset="0.625" stop-color="#ffc0c0"/><stop offset="0.75" stop-color="#ff8080"/><stop offset="0.875" stop-color="#ff4040"/><stop offset="1" stop-color="#ff0101"/></linearGradient><linearGradient id="g83"><stop offset="0" stop-color="#0000ff"/><stop offset="0.125" stop-color="#4040ff"/><stop offset="0.25" stop-color="#7f7fff"/><stop offset="0.375" stop-color="#bfbfff"/><stop offset="0.5" stop-color="#ffffff"/><stop offset="0.5003" stop-color="#ffffff"/><stop offset="0.625" stop-color="#ffbfbf"/><stop offset="0.75" stop-color="#ff8080"/><stop offset="0.875" stop-color="#ff4040"/><stop offset="1" stop-color="#ff0000"/></linearGradient><linearGradient id="g84"><stop offset="0" stop-color="#0000ff"/><stop offset="0.125" stop-color="#4040ff"/><stop offset="0.25" stop-color="#7f7fff"/><stop offset="0.375" stop-color="#bfbfff"/><stop offset="0.5" stop-color="#ffffff"/><stop offset="0.5001" stop-color="#ffffff"/><stop offset="0.625" stop-color="#ffbfbf"/><stop offset="0.75" stop-color="#ff8080"/><stop offset="0.875" stop-color="#ff4040"/><stop offset="1" stop-color="#ff0000"/></linearGradient><linearGradient id="g85"><stop offset="0" stop-color="#0000ff"/><stop offset="0.125" stop-color="#4040ff"/><stop offset="0.25" stop-color="#7f7fff"/><stop offset="0.375" stop-color="#bfbfff"/><stop offset="0.5" stop-color="#ffffff"/><stop offset="0.5" stop-color="#ffffff"/><stop offset="0.625" stop-color="#ffbfbf"/><stop offset="0.75" stop-color="#ff8080"/><stop offset="0.875" stop-color="#ff4040"/><stop offset="1" stop-color="#ff0000"/></linearGradient><linearGradient id="g86"><stop offset="0" stop-color="#0000ff"/><stop offset="0.125" stop-color="#4040ff"/><stop offset="0.25" stop-color="#7f7fff"/><stop offset="0.375" stop-color="#bfbfff"/><stop offset="0.5" stop-color="#ffffff"/><stop offset="0.5" stop-color="#ffffff"/><stop offset="0.625" stop-color="#ffbfbf"/><stop offset="0.75" stop-color="#ff8080"/><stop offset="0.875" stop-color="#ff4040"/><stop offset="1" stop-color="#ff0000"/></linearGradient><linearGradient id="g87"><stop offset="0" stop-color="#0000ff"/><stop offset="0.125" stop-color="#4040ff"/><stop offset="0.25" stop-color="#7f7fff"/><stop offset="0.375" stop-color="#bfbfff"/><stop offset="0.5" stop-color="#ffffff"/><stop offset="0.5001" stop-color="#ffffff"/><stop offset="0.625" stop-color="#ffbfbf"/><stop offset="0.75" stop-color="#ff8080"/><stop offset="0.875" stop-color="#ff4040"/><stop offset="1" stop-color="#ff0000"/></linearGradient><linearGradient id="g88"><stop offset="0" stop-color="#0000ff"/><stop offset="0.125" stop-color="#4040ff"/><stop offset="0.25" stop-color="#7f7fff"/><stop offset="0.375" stop-color="#bfbfff"/><stop offset="0.5" stop-color="#ffffff"/><stop offset="0.5003" stop-color="#ffffff"/><stop offset="0.625" stop-color="#ffbfbf"/><stop offset="0.75" stop-color="#ff8080"/><stop offset="0.875" stop-color="#ff4040"/><stop offset="1" stop-color="#ff0000"/></linearGradient><linearGradient id="g89"><stop offset="0" stop-color="#0000ff"/><stop offset="0.125" stop-color="#4040ff"/><stop offset="0.25" stop-color="#7f7fff"/><stop offset="0.375" stop-color="#bfbfff"/><stop offset="0.5" stop-color="#ffffff"/><stop offset="0.5006" stop-color="#ffffff"/><stop offset="0.625" stop-color="#ffc0c0"/><stop offset="0.75" stop-color="#ff8080"/><stop offset="0.875" stop-color="#ff4040"/><stop offset="1" stop-color="#ff0101"/></linearGradient><linearGradient id="g90"><stop offset="0" stop-color="#0000ff"/><stop offset="0.125" stop-color="#4040ff"/><stop offset="0.25" stop-color="#7f7fff"/><stop offset="0.375" stop-color="#bfbfff"/><stop offset="0.5" stop-color="#ffffff"/><stop offset="0.501" stop-color="#ffffff"/><stop offset="0.625" stop-color="#ffc0c0"/><stop offset="0.75" stop-color="#ff8080"/><stop offset="0.875" stop-color="#ff4141"/><stop offset="1" stop-color="#ff0101"/></linearGradient><linearGradient id="g91"><stop offset="0" stop-color="#0000ff"/><stop offset="0.125" stop-color="#4040ff"/><stop offset="0.25" stop-color="#7f7fff"/><stop offset="0.375" stop-color="#bfbfff"/><stop offset="0.5" stop-color="#fefeff"/><stop offset="0.5014" stop-color="#ffffff"/><stop offset="0.625" stop-color="#ffc0c0"/><stop offset="0.75" stop-color="#ff8181"/><stop offset="0.875" stop-color="#ff4141"/><stop offset="1" stop-color="#ff0101"/></linearGradient><linearGradient id="g92"><stop offset="0" stop-color="#0000ff"/><stop offset="0.125" stop-color="#3f3fff"/><stop offset="0.25" stop-color="#7f7fff"/><stop offset="0.375" stop-color="#bebeff"/><stop offset="0.5" stop-color="#fefeff"/><stop offset="0.502" stop-color="#ffffff"/><stop offset="0.625" stop-color="#ffc1c1"/><stop offset="0.75" stop-color="#ff8181"/><stop offset="0.875" stop-color="#ff4242"/><stop offset="1" stop-color="#ff0202"/></linearGradient><linearGradient id="g93"><stop offset="0" stop-color="#0000ff"/><stop offset="0.125" stop-color="#3f3fff"/><stop offset="0.25" stop-color="#7f7fff"/><stop offset="0.375" stop-color="#bebeff"/><stop offset="0.5" stop-color="#fefeff"/><stop offset="0.5027" stop-color="#ffffff"/><stop offset="0.625" stop-color="#ffc1c1"/><stop offset="0.75" stop-color="#ff8282"/><stop offset="0.875" stop-color="#ff4242"/><stop offset="1" stop-color="#ff0303"/></linearGradient><linearGradient id="g94"><stop offset="0" stop-color="#0000ff"/><stop offset="0.125" stop-color="#3f3fff"/><stop offset="0.25" stop-color="#7f7fff"/><stop offset="0.375" stop-color="#bebeff"/><stop offset="0.5" stop-color="#fdfdff"/><stop offset="0.5035" stop-color="#ffffff"/><stop offset="0.625" stop-color="#ffc1c1"/><stop offset="0.75" stop-color="#ff8282"/><stop offset="0.875" stop-color="#ff4343"/><stop offset="1" stop-color="#ff0404"/></linearGradient><linearGradient id="g95"><stop offset="0" stop-color="#0000ff"/><stop offset="0.125" stop-color="#3f3fff"/><stop offset="0.25" stop-color="#7e7eff"/><stop offset="0.375" stop-color="#bebeff"/><stop offset="0.5" stop-color="#fdfdff"/><stop offset="0.5044" stop-color="#ffffff"/><stop offset="0.625" stop-color="#ffc2c2"/><stop offset="0.75" stop-color="#ff8383"/><stop offset="0.875" stop-color="#ff4444"/><stop offset="1" stop-color="#ff0404"/></linearGradient><linearGradient id="g96"><stop offset="0" stop-color="#0000ff"/><stop offset="0.125" stop-color="#3f3fff"/><stop offset="0.25" stop-color="#7e7eff"/><stop offset="0.375" stop-color="#bdbdff"/><stop offset="0.5" stop-color="#fcfcff"/><stop offset="0.5054" stop-color="#ffffff"/><stop offset="0.625" stop-color="#ffc3c3"/><stop offset="0.75" stop-color="#ff8484"/><stop offset="0.875" stop-color="#ff4545"/><stop offset="1" stop-color="#ff0505"/></linearGradient><linearGradient id="g97"><stop offset="0" stop-color="#0000ff"/><stop offset="0.125" stop-color="#3f3fff"/><stop offset="0.25" stop-color="#7e7eff"/><stop offset="0.375" stop-color="#bdbdff"/><stop offset="0.5" stop-color="#fcfcff"/><stop offset="0.5065" stop-color="#ffffff"/><stop offset="0.625" stop-color="#ffc3c3"/><stop offset="0.75" stop-color="#ff8484"/><stop offset="0.875" stop-color="#ff4545"/><stop offset="1" stop-color="#ff0707"/></linearGradient><linearGradient id="g98"><stop offset="0" stop-color="#0000ff"/><stop offset="0.125" stop-color="#3f3fff"/><stop offset="0.25" stop-color="#7e7eff"/><stop offset="0.375" stop-color="#bcbcff"/><stop offset="0.5" stop-color="#fbfbff"/><stop offset="0.5077" stop-color="#ffffff"/><stop offset="0.625" stop-color="#ffc4c4"/><stop offset="0.75" stop-color="#ff8585"/><stop offset="0.875" stop-color="#ff4747"/><stop offset="1" stop-color="#ff0808"/></linearGradient><linearGradient id="g99"><stop offset="0" stop-color="#0000ff"/><stop offset="0.125" stop-color="#3f3fff"/><stop offset="0.25" stop-color="#7d7dff"/><stop offset="0.375" stop-color="#bcbcff"/><stop offset="0.5" stop-color="#fafaff"/><stop offset="0.509" stop-color="#ffffff"/><stop offset="0.625" stop-color="#ffc5c5"/><stop offset="0.75" stop-color="#ff8686"/><stop offset="0.875" stop-color="#ff4848"/><stop offset="1" stop-color="#ff0909"/></linearGradient><linearGradient id="g100"><stop offset="0" stop-color="#0000ff"/><stop offset="0.125" stop-color="#3e3eff"/><stop offset="0.25" stop-color="#7d7dff"/><stop offset="0.375" stop-color="#bbbbff"/><stop offset="0.5" stop-color="#fafaff"/><stop offset="0.5104" stop-color="#ffffff"/><stop offset="0.625" stop-color="#ffc6c6"/><stop offset="0.75" stop-color="#ff8787"/><stop offset="0.875" stop-color="#ff4949"/><stop offset="1" stop-color="#ff0a0a"/></linearGradient><linearGradient id="g101"><stop offset="0" stop-color="#0000ff"/><stop offset="0.125" stop-color="#3e3eff"/><stop offset="0.25" stop-color="#7d7dff"/><stop offset="0.375" stop-color="#bbbbff"/><stop offset="0.5" stop-color="#f9f9ff"/><stop offset="0.512" stop-color="#ffffff"/><stop offset="0.625" stop-color="#ffc7c7"/><stop offset="0.75" stop-color="#ff8888"/><stop offset="0.875" stop-color="#ff4a4a"/><stop offset="1" stop-color="#ff0c0c"/></linearGradient><linearGradient id="g102"><stop offset="0" stop-color="#0000ff"/><stop offset="0.125" stop-color="#3e3eff"/><stop offset="0.25" stop-color="#7c7cff"/><stop offset="0.375" stop-color="#babaff"/><stop offset="0.5" stop-color="#f8f8ff"/><stop offset="0.5136" stop-color="#ffffff"/><stop offset="0.625" stop-color="#ffc8c8"/><stop offset="0.75" stop-color="#ff8a8a"/><stop offset="0.875" stop-color="#ff4c4c"/><stop offset="1" stop-color="#ff0e0e"/></linearGradient><linearGradient id="g103"><stop offset="0" stop-color="#0000ff"/><stop offset="0.125" stop-color="#3e3eff"/><stop offset="0.25" stop-color="#7c7cff"/><stop offset="0.375" stop-color="#babaff"/><stop offset="0.5" stop-color="#f7f7ff"/><stop offset="0.5153" stop-color="#ffffff"/><stop offset="0.625" stop-color="#ffc9c9"/><stop offset="0.75" stop-color="#ff8b8b"/><stop offset="0.875" stop-color="#ff4d4d"/><stop offset="1" stop-color="#ff0f0f"/></linearGradient><linearGradient id="g104"><stop offset="0" stop-color="#0000ff"/><stop offset="0.125" stop-color="#3e3eff"/><stop offset="0.25" stop-color="#7b7bff"/><stop offset="0.375" stop-color="#b9b9ff"/><stop offset="0.5" stop-color="#f7f7ff"/><stop offset="0.5172" stop-color="#ffffff"/><stop offset="0.625" stop-color="#ffcaca"/><stop offset="0.75" stop-color="#ff8c8c"/><stop offset="0.875" stop-color="#ff4f4f"/><stop offset="1" stop-color="#ff1111"/></linearGradient><linearGradient id="g105"><stop offset="0" stop-color="#0000ff"/><stop offset="0.125" stop-color="#3d3dff"/><stop offset="0.25" stop-color="#7b7bff"/><stop offset="0.375" stop-color="#b8b8ff"/><stop offset="0.5" stop-color="#f6f6ff"/><stop offset="0.5191" stop-color="#ffffff"/><stop offset="0.625" stop-color="#ffcbcb"/><stop offset="0.75" stop-color="#ff8e8e"/><stop offset="0.875" stop-color="#ff5050"/><stop offset="1" stop-color="#ff1313"/></linearGradient><linearGradient id="g106"><stop offset="0" stop-color="#0000ff"/><stop offset="0.125" stop-color="#3d3dff"/><stop offset="0.25" stop-color="#7a7aff"/><stop offset="0.375" stop-color="#b7b7ff"/><stop offset="0.5" stop-color="#f5f5ff"/><stop offset="0.5212" stop-color="#ffffff"/><stop offset="0.625" stop-color="#ffcccc"/><stop offset="0.75" stop-color="#ff8f8f"/><stop offset="0.875" stop-color="#ff5252"/><stop offset="1" stop-color="#ff1515"/></linearGradient><linearGradient id="g107"><stop offset="0" stop-color="#0000ff"/><stop offset="0.125" stop-color="#3d3dff"/><stop offset="0.25" stop-color="#7a7aff"/><stop offset="0.375" stop-color="#b7b7ff"/><stop offset="0.5" stop-color="#f4f4ff"/><stop offset="0.5234" stop-color="#ffffff"/><stop offset="0.625" stop-color="#ffcece"/><stop offset="0.75" stop-color="#ff9191"/><stop offset="0.875" stop-color="#ff5454"/><stop offset="1" stop-color="#ff1717"/></linearGradient><linearGradient id="g108"><stop offset="0" stop-color="#0000ff"/><stop offset="0.125" stop-color="#3d3dff"/><stop offset="0.25" stop-color="#7979ff"/><stop offset="0.375" stop-color="#b6b6ff"/><stop offset="0.5" stop-color="#f3f3ff"/><stop offset="0.5257" stop-color="#ffffff"/><stop offset="0.625" stop-color="#ffcfcf"/><stop offset="0.75" stop-color="#ff9292"/><stop offset="0.875" stop-color="#ff5656"/><stop offset="1" stop-color="#ff1919"/></linearGradient><linearGradient id="g109"><stop offset="0" stop-color="#0000ff"/><stop offset="0.125" stop-color="#3c3cff"/><stop offset="0.25" stop-color="#7979ff"/><stop offset="0.375" stop-color="#b5b5ff"/><stop offset="0.5" stop-color="#f1f1ff"/><stop offset="0.5282" stop-color="#ffffff"/><stop offset="0.625" stop-color="#ffd0d0"/><stop offset="0.75" stop-color="#ff9494"/><stop offset="0.875" stop-color="#ff5858"/><stop offset="1" stop-color="#ff1b1b"/></linearGradient><linearGradient id="g110"><stop offset="0" stop-color="#0000ff"/><stop offset="0.125" stop-color="#3c3cff"/><stop offset="0.25" stop-color="#7878ff"/><stop offset="0.375" stop-color="#b4b4ff"/><stop offset="0.5" stop-color="#f0f0ff"/><stop offset="0.5307" stop-color="#ffffff"/><stop offset="0.625" stop-color="#ffd2d2"/><stop offset="0.75" stop-color="#ff9696"/><stop offset="0.875" stop-color="#ff5a5a"/><stop offset="1" stop-color="#ff1e1e"/></linearGradient><linearGradient id="g111"><stop offset="0" stop-color="#0000ff"/><stop offset="0.125" stop-color="#3c3cff"/><stop offset="0.25" stop-color="#7878ff"/><stop offset="0.375" stop-color="#b3b3ff"/><stop offset="0.5" stop-color="#efefff"/><stop offset="0.5334" stop-color="#ffffff"/><stop offset="0.625" stop-color="#ffd3d3"/><stop offset="0.75" stop-color="#ff9898"/><stop offset="0.875" stop-color="#ff5c5c"/><stop offset="1" stop-color="#ff2020"/></linearGradient><linearGradient id="g112"><stop offset="0" stop-color="#0000ff"/><stop offset="0.125" stop-color="#3c3cff"/><stop offset="0.25" stop-color="#7777ff"/><stop offset="0.375" stop-color="#b2b2ff"/><stop offset="0.5" stop-color="#eeeeff"/><stop offset="0.5362" stop-color="#ffffff"/><stop offset="0.625" stop-color="#ffd5d5"/><stop offset="0.75" stop-color="#ff9999"/><stop offset="0.875" stop-color="#ff5e5e"/><stop offset="1" stop-color="#ff2323"/></linearGradient><linearGradient id="g113"><stop offset="0" stop-color="#0000ff"/><stop offset="0.125" stop-color="#3b3bff"/><stop offset="0.25" stop-color="#7676ff"/><stop offset="0.375" stop-color="#b1b1ff"/><stop offset="0.5" stop-color="#ededff"/><stop offset="0.5391" stop-color="#ffffff"/><stop offset="0.625" stop-color="#ffd6d6"/><stop offset="0.75" stop-color="#ff9b9b"/><stop offset="0.875" stop-color="#ff6060"/><stop offset="1" stop-color="#ff2525"/></linearGradient><linearGradient id="g114"><stop offset="0" stop-color="#0000ff"/><stop offset="0.125" stop-color="#3b3bff"/><stop offset="0.25" stop-color="#7676ff"/><stop offset="0.375" stop-color="#b0b0ff"/><stop offset="0.5" stop-color="#ebebff"/><stop offset="0.5422" stop-color="#ffffff"/><stop offset="0.625" stop-color="#ffd8d8"/><stop offset="0.75" stop-color="#ff9d9d"/><stop offset="0.875" stop-color="#ff6363"/><stop offset="1" stop-color="#ff2828"/></linearGradient><linearGradient id="g115"><stop offset="0" stop-color="#0000ff"/><stop offset="0.125" stop-color="#3b3bff"/><stop offset="0.25" stop-color="#7575ff"/><stop offset="0.375" stop-color="#afafff"/><stop offset="0.5" stop-color="#eaeaff"/><stop offset="0.5454" stop-color="#ffffff"/><stop offset="0.625" stop-color="#ffdada"/><stop offset="0.75" stop-color="#ff9f9f"/><stop offset="0.875" stop-color="#ff6565"/><stop offset="1" stop-color="#ff2b2b"/></linearGradient><linearGradient id="g116"><stop offset="0" stop-color="#0000ff"/><stop offset="0.125" stop-color="#3a3aff"/><stop offset="0.25" stop-color="#7474ff"/><stop offset="0.375" stop-color="#aeaeff"/><stop offset="0.5" stop-color="#e8e8ff"/><stop offset="0.5487" stop-color="#ffffff"/><stop offset="0.625" stop-color="#ffdcdc"/><stop offset="0.75" stop-color="#ffa2a2"/><stop offset="0.875" stop-color="#ff6868"/><stop offset="1" stop-color="#ff2e2e"/></linearGradient><linearGradient id="g117"><stop offset="0" stop-color="#0000ff"/><stop offset="0.125" stop-color="#3a3aff"/><stop offset="0.25" stop-color="#7474ff"/><stop offset="0.375" stop-color="#adadff"/><stop offset="0.5" stop-color="#e7e7ff"/><stop offset="0.5521" stop-color="#ffffff"/><stop offset="0.625" stop-color="#ffdddd"/><stop offset="0.75" stop-color="#ffa4a4"/><stop offset="0.875" stop-color="#ff6a6a"/><stop offset="1" stop-color="#ff3131"/></linearGradient><linearGradient id="g118"><stop offset="0" stop-color="#0000ff"/><stop offset="0.125" stop-color="#3a3aff"/><stop offset="0.25" stop-color="#7373ff"/><stop offset="0.375" stop-color="#acacff"/><stop offset="0.5" stop-color="#e5e5ff"/><stop offset="0.5558" stop-color="#ffffff"/><stop offset="0.625" stop-color="#ffdfdf"/><stop offset="0.75" stop-color="#ffa6a6"/><stop offset="0.875" stop-color="#ff6d6d"/><stop offset="1" stop-color="#ff3434"/></linearGradient><linearGradient id="g119"><stop offset="0" stop-color="#0000ff"/><stop offset="0.125" stop-color="#3939ff"/><stop offset="0.25" stop-color="#7272ff"/><stop offset="0.375" stop-color="#ababff"/><stop offset="0.5" stop-color="#e4e4ff"/><stop offset="0.5595" stop-color="#ffffff"/><stop offset="0.625" stop-color="#ffe1e1"/><stop offset="0.75" stop-color="#ffa8a8"/><stop offset="0.875" stop-color="#ff7070"/><stop offset="1" stop-color="#ff3737"/></linearGradient><linearGradient id="g120"><stop offset="0" stop-color="#0000ff"/><stop offset="0.125" stop-color="#3939ff"/><stop offset="0.25" stop-color="#7171ff"/><stop offset="0.375" stop-color="#aaaaff"/><stop offset="0.5" stop-color="#e2e2ff"/><stop offset="0.5634" stop-color="#ffffff"/><stop offset="0.625" stop-color="#ffe3e3"/><stop offset="0.75" stop-color="#ffabab"/><stop offset="0.875" stop-color="#ff7373"/><stop offset="1" stop-color="#ff3a3a"/></linearGradient><linearGradient id="g121"><stop offset="0" stop-color="#0000ff"/><stop offset="0.125" stop-color="#3838ff"/><stop offset="0.25" stop-color="#7171ff"/><stop offset="0.375" stop-color="#a9a9ff"/><stop offset="0.5" stop-color="#e1e1ff"/><stop offset="0.5675" stop-color="#ffffff"/><stop offset="0.625" stop-color="#ffe5e5"/><stop offset="0.75" stop-color="#ffadad"/><stop offset="0.875" stop-color="#ff7575"/><stop offset="1" stop-color="#ff3e3e"/></linearGradient><linearGradient id="g122"><stop offset="0" stop-color="#0000ff"/><stop offset="0.125" stop-color="#3838ff"/><stop offset="0.25" stop-color="#7070ff"/><stop offset="0.375" stop-color="#a8a8ff"/><stop offset="0.5" stop-color="#dfdfff"/><stop offset="0.5717" stop-color="#ffffff"/><stop offset="0.625" stop-color="#ffe7e7"/><stop offset="0.75" stop-color="#ffb0b0"/><stop offset="0.875" stop-color="#ff7878"/><stop offset="1" stop-color="#ff4141"/></linearGradient><linearGradient id="g123"><stop offset="0" stop-color="#0000ff"/><stop offset="0.125" stop-color="#3838ff"/><stop offset="0.25" stop-color="#6f6fff"/><stop offset="0.375" stop-color="#a6a6ff"/><stop offset="0.5" stop-color="#ddddff"/><stop offset="0.5761" stop-color="#ffffff"/><stop offset="0.625" stop-color="#ffe9e9"/><stop offset="0.75" stop-color="#ffb2b2"/><stop offset="0.875" stop-color="#ff7b7b"/><stop offset="1" stop-color="#ff4444"/></linearGradient><linearGradient id="g124"><stop offset="0" stop-color="#0000ff"/><stop offset="0.125" stop-color="#3737ff"/><stop offset="0.25" stop-color="#6e6eff"/><stop offset="0.375" stop-color="#a5a5ff"/><stop offset="0.5" stop-color="#dcdcff"/><stop offset="0.5806" stop-color="#ffffff"/><stop offset="0.625" stop-color="#ffecec"/><stop offset="0.75" stop-color="#ffb5b5"/><stop offset="0.875" stop-color="#ff7e7e"/><stop offset="1" stop-color="#ff4848"/></linearGradient><linearGradient id="g125"><stop offset="0" stop-color="#0000ff"/><stop offset="0.125" stop-color="#3737ff"/><stop offset="0.25" stop-color="#6d6dff"/><stop offset="0.375" stop-color="#a4a4ff"/><stop offset="0.5" stop-color="#dadaff"/><stop offset="0.5853" stop-color="#ffffff"/><stop offset="0.625" stop-color="#ffeeee"/><stop offset="0.75" stop-color="#ffb8b8"/><stop offset="0.875" stop-color="#ff8282"/><stop offset="1" stop-color="#ff4c4c"/></linearGradient><linearGradient id="g126"><stop offset="0" stop-color="#0000ff"/><stop offset="0.125" stop-color="#3636ff"/><stop offset="0.25" stop-color="#6d6dff"/><stop offset="0.375" stop-color="#a2a2ff"/><stop offset="0.5" stop-color="#d8d8ff"/><stop offset="0.5902" stop-color="#ffffff"/><stop offset="0.625" stop-color="#fff0f0"/><stop offset="0.75" stop-color="#ffbaba"/><stop offset="0.875" stop-color="#ff8585"/><stop offset="1" stop-color="#ff4f4f"/></linearGradient><linearGradient id="g127"><stop offset="0" stop-color="#0000ff"/><stop offset="0.125" stop-color="#3636ff"/><stop offset="0.25" stop-color="#6c6cff"/><stop offset="0.375" stop-color="#a1a1ff"/><stop offset="0.5" stop-color="#d6d6ff"/><stop offset="0.5953" stop-color="#ffffff"/><stop offset="0.625" stop-color="#fff2f2"/><stop offset="0.75" stop-color="#ffbdbd"/><stop offset="0.875" stop-color="#ff8888"/><stop offset="1" stop-color="#ff5353"/></linearGradient><linearGradient id="g128"><stop offset="0" stop-color="#0000ff"/><stop offset="0.125" stop-color="#3636ff"/><stop offset="0.25" stop-color="#6b6bff"/><stop offset="0.375" stop-color="#a0a0ff"/><stop offset="0.5" stop-color="#d5d5ff"/><stop offset="0.6006" stop-color="#ffffff"/><stop offset="0.625" stop-color="#fff5f5"/><stop offset="0.75" stop-color="#ffc0c0"/><stop offset="0.875" stop-color="#ff8b8b"/><stop offset="1" stop-color="#ff5757"/></linearGradient><linearGradient id="g129"><stop offset="0" stop-color="#0000ff"/><stop offset="0.125" stop-color="#3535ff"/><stop offset="0.25" stop-color="#6a6aff"/><stop offset="0.375" stop-color="#9e9eff"/><stop offset="0.5" stop-color="#d3d3ff"/><stop offset="0.606" stop-color="#ffffff"/><stop offset="0.625" stop-color="#fff7f7"/><stop offset="0.75" stop-color="#ffc3c3"/><stop offset="0.875" stop-color="#ff8f8f"/><stop offset="1" stop-color="#ff5b5b"/></linearGradient><linearGradient id="g130"><stop offset="0" stop-color="#0000ff"/><stop offset="0.125" stop-color="#3535ff"/><stop offset="0.25" stop-color="#6969ff"/><stop offset="0.375" stop-color="#9d9dff"/><stop offset="0.5" stop-color="#d1d1ff"/><stop offset="0.6117" stop-color="#ffffff"/><stop offset="0.625" stop-color="#fffafa"/><stop offset="0.75" stop-color="#ffc6c6"/><stop offset="0.875" stop-color="#ff9292"/><stop offset="1" stop-color="#ff5f5f"/></linearGradient><linearGradient id="g131"><stop offset="0" stop-color="#0000ff"/><stop offset="0.125" stop-color="#3434ff"/><stop offset="0.25" stop-color="#6868ff"/><stop offset="0.375" stop-color="#9c9cff"/><stop offset="0.5" stop-color="#cfcfff"/><stop offset="0.6176" stop-color="#ffffff"/><stop offset="0.625" stop-color="#fffcfc"/><stop offset="0.75" stop-color="#ffc9c9"/><stop offset="0.875" stop-color="#ff9696"/><stop offset="1" stop-color="#ff6363"/></linearGradient><linearGradient id="g132"><stop offset="0" stop-color="#0000ff"/><stop offset="0.125" stop-color="#3434ff"/><stop offset="0.25" stop-color="#6767ff"/><stop offset="0.375" stop-color="#9a9aff"/><stop offset="0.5" stop-color="#cdcdff"/><stop offset="0.6237" stop-color="#ffffff"/><stop offset="0.625" stop-color="#fffefe"/><stop offset="0.75" stop-color="#ffcccc"/><stop offset="0.875" stop-color="#ff9999"/><stop offset="1" stop-color="#ff6767"/></linearGradient><linearGradient id="g133"><stop offset="0" stop-color="#0000ff"/><stop offset="0.125" stop-color="#3434ff"/><stop offset="0.25" stop-color="#6666ff"/><stop offset="0.375" stop-color="#9999ff"/><stop offset="0.5" stop-color="#cbcbff"/><stop offset="0.625" stop-color="#fdfdff"/><stop offset="0.63" stop-color="#ffffff"/><stop offset="0.75" stop-color="#ffcfcf"/><stop offset="0.875" stop-color="#ff9d9d"/><stop offset="1" stop-color="#ff6b6b"/></linearGradient><linearGradient id="g134"><stop offset="0" stop-color="#0000ff"/><stop offset="0.125" stop-color="#3333ff"/><stop offset="0.25" stop-color="#6565ff"/><stop offset="0.375" stop-color="#9797ff"/><stop offset="0.5" stop-color="#c9c9ff"/><stop offset="0.625" stop-color="#fafaff"/><stop offset="0.6366" stop-color="#ffffff"/><stop offset="0.75" stop-color="#ffd2d2"/><stop offset="0.875" stop-color="#ffa1a1"/><stop offset="1" stop-color="#ff7070"/></linearGradient><linearGradient id="g135"><stop offset="0" stop-color="#0000ff"/><stop offset="0.125" stop-color="#3333ff"/><stop offset="0.25" stop-color="#6464ff"/><stop offset="0.375" stop-color="#9696ff"/><stop offset="0.5" stop-color="#c7c7ff"/><stop offset="0.625" stop-color="#f8f8ff"/><stop offset="0.6434" stop-color="#ffffff"/><stop offset="0.75" stop-color="#ffd5d5"/><stop offset="0.875" stop-color="#ffa5a5"/><stop offset="1" stop-color="#ff7474"/></linearGradient><linearGradient id="g136"><stop offset="0" stop-color="#0000ff"/><stop offset="0.125" stop-color="#3232ff"/><stop offset="0.25" stop-color="#6363ff"/><stop offset="0.375" stop-color="#9494ff"/><stop offset="0.5" stop-color="#c5c5ff"/><stop offset="0.625" stop-color="#f5f5ff"/><stop offset="0.6504" stop-color="#ffffff"/><stop offset="0.75" stop-color="#ffd9d9"/><stop offset="0.875" stop-color="#ffa8a8"/><stop offset="1" stop-color="#ff7878"/></linearGradient><linearGradient id="g137"><stop offset="0" stop-color="#0000ff"/><stop offset="0.125" stop-color="#3232ff"/><stop offset="0.25" stop-color="#6262ff"/><stop offset="0.375" stop-color="#9393ff"/><stop offset="0.5" stop-color="#c3c3ff"/><stop offset="0.625" stop-color="#f2f2ff"/><stop offset="0.6578" stop-color="#ffffff"/><stop offset="0.75" stop-color="#ffdcdc"/><stop offset="0.875" stop-color="#ffacac"/><stop offset="1" stop-color="#ff7d7d"/></linearGradient><linearGradient id="g138"><stop offset="0" stop-color="#0000ff"/><stop offset="0.125" stop-color="#3131ff"/><stop offset="0.25" stop-color="#6161ff"/><stop offset="0.375" stop-color="#9191ff"/><stop offset="0.5" stop-color="#c1c1ff"/><stop offset="0.625" stop-color="#f0f0ff"/><stop offset="0.6654" stop-color="#ffffff"/><stop offset="0.75" stop-color="#ffdfdf"/><stop offset="0.875" stop-color="#ffb0b0"/><stop offset="1" stop-color="#ff8181"/></linearGradient><linearGradient id="g139"><stop offset="0" stop-color="#0000ff"/><stop offset="0.125" stop-color="#3131ff"/><stop offset="0.25" stop-color="#6060ff"/><stop offset="0.375" stop-color="#9090ff"/><stop offset="0.5" stop-color="#bebeff"/><stop offset="0.625" stop-color="#ededff"/><stop offset="0.6733" stop-color="#ffffff"/><stop offset="0.75" stop-color="#ffe2e2"/><stop offset="0.875" stop-color="#ffb4b4"/><stop offset="1" stop-color="#ff8686"/></linearGradient><linearGradient id="g140"><stop offset="0" stop-color="#0000ff"/><stop offset="0.125" stop-color="#3030ff"/><stop offset="0.25" stop-color="#5f5fff"/><stop offset="0.375" stop-color="#8e8eff"/><stop offset="0.5" stop-color="#bcbcff"/><stop offset="0.625" stop-color="#eaeaff"/><stop offset="0.6815" stop-color="#ffffff"/><stop offset="0.75" stop-color="#ffe6e6"/><stop offset="0.875" stop-color="#ffb8b8"/><stop offset="1" stop-color="#ff8b8b"/></linearGradient><linearGradient id="g141"><stop offset="0" stop-color="#0000ff"/><stop offset="0.125" stop-color="#3030ff"/><stop offset="0.25" stop-color="#5e5eff"/><stop offset="0.375" stop-color="#8c8cff"/><stop offset="0.5" stop-color="#babaff"/><stop offset="0.625" stop-color="#e7e7ff"/><stop offset="0.69" stop-color="#ffffff"/><stop offset="0.75" stop-color="#ffe9e9"/><stop offset="0.875" stop-color="#ffbcbc"/><stop offset="1" stop-color="#ff8f8f"/></linearGradient><linearGradient id="g142"><stop offset="0" stop-color="#0000ff"/><stop offset="0.125" stop-color="#2f2fff"/><stop offset="0.25" stop-color="#5d5dff"/><stop offset="0.375" stop-color="#8b8bff"/><stop offset="0.5" stop-color="#b8b8ff"/><stop offset="0.625" stop-color="#e5e5ff"/><stop offset="0.6989" stop-color="#ffffff"/><stop offset="0.75" stop-color="#ffeded"/><stop offset="0.875" stop-color="#ffc0c0"/><stop offset="1" stop-color="#ff9494"/></linearGradient><linearGradient id="g143"><stop offset="0" stop-color="#0000ff"/><stop offset="0.125" stop-color="#2f2fff"/><stop offset="0.25" stop-color="#5c5cff"/><stop offset="0.375" stop-color="#8989ff"/><stop offset="0.5" stop-color="#b6b6ff"/><stop offset="0.625" stop-color="#e2e2ff"/><stop offset="0.7081" stop-color="#ffffff"/><stop offset="0.75" stop-color="#fff0f0"/><stop offset="0.875" stop-color="#ffc4c4"/><stop offset="1" stop-color="#ff9999"/></linearGradient><linearGradient id="g144"><stop offset="0" stop-color="#0000ff"/><stop offset="0.125" stop-color="#2e2eff"/><stop offset="0.25" stop-color="#5b5bff"/><stop offset="0.375" stop-color="#8787ff"/><stop offset="0.5" stop-color="#b3b3ff"/><stop offset="0.625" stop-color="#dfdfff"/><stop offset="0.7177" stop-color="#ffffff"/><stop offset="0.75" stop-color="#fff4f4"/><stop offset="0.875" stop-color="#ffc9c9"/><stop offset="1" stop-color="#ff9e9e"/></linearGradient><linearGradient id="g145"><stop offset="0" stop-color="#0000ff"/><stop offset="0.125" stop-color="#2e2eff"/><stop offset="0.25" stop-color="#5a5aff"/><stop offset="0.375" stop-color="#8686ff"/><stop offset="0.5" stop-color="#b1b1ff"/><stop offset="0.625" stop-color="#dcdcff"/><stop offset="0.7276" stop-color="#ffffff"/><stop offset="0.75" stop-color="#fff7f7"/><stop offset="0.875" stop-color="#ffcdcd"/><stop offset="1" stop-color="#ffa3a3"/></linearGradient><linearGradient id="g146"><stop offset="0" stop-color="#0000ff"/><stop offset="0.125" stop-color="#2d2dff"/><stop offset="0.25" stop-color="#5959ff"/><stop offset="0.375" stop-color="#8484ff"/><stop offset="0.5" stop-color="#afafff"/><stop offset="0.625" stop-color="#d9d9ff"/><stop offset="0.738" stop-color="#ffffff"/><stop offset="0.75" stop-color="#fffbfb"/><stop offset="0.875" stop-color="#ffd1d1"/><stop offset="1" stop-color="#ffa8a8"/></linearGradient><linearGradient id="g147"><stop offset="0" stop-color="#0000ff"/><stop offset="0.125" stop-color="#2d2dff"/><stop offset="0.25" stop-color="#5858ff"/><stop offset="0.375" stop-color="#8282ff"/><stop offset="0.5" stop-color="#acacff"/><stop offset="0.625" stop-color="#d6d6ff"/><stop offset="0.7489" stop-color="#ffffff"/><stop offset="0.75" stop-color="#ffffff"/><stop offset="0.875" stop-color="#ffd5d5"/><stop offset="1" stop-color="#ffadad"/></linearGradient><linearGradient id="g148"><stop offset="0" stop-color="#0000ff"/><stop offset="0.125" stop-color="#2d2dff"/><stop offset="0.25" stop-color="#5757ff"/><stop offset="0.375" stop-color="#8181ff"/><stop offset="0.5" stop-color="#aaaaff"/><stop offset="0.625" stop-color="#d3d3ff"/><stop offset="0.75" stop-color="#fcfcff"/><stop offset="0.7601" stop-color="#ffffff"/><stop offset="0.875" stop-color="#ffdada"/><stop offset="1" stop-color="#ffb2b2"/></linearGradient><linearGradient id="g149"><stop offset="0" stop-color="#0000ff"/><stop offset="0.125" stop-color="#2c2cff"/><stop offset="0.25" stop-color="#5656ff"/><stop offset="0.375" stop-color="#7f7fff"/><stop offset="0.5" stop-color="#a8a8ff"/><stop offset="0.625" stop-color="#d0d0ff"/><stop offset="0.75" stop-color="#f8f8ff"/><stop offset="0.7719" stop-color="#ffffff"/><stop offset="0.875" stop-color="#ffdede"/><stop offset="1" stop-color="#ffb7b7"/></linearGradient><linearGradient id="g150"><stop offset="0" stop-color="#0000ff"/><stop offset="0.125" stop-color="#2c2cff"/><stop offset="0.25" stop-color="#5555ff"/><stop offset="0.375" stop-color="#7d7dff"/><stop offset="0.5" stop-color="#a5a5ff"/><stop offset="0.625" stop-color="#cdcdff"/><stop offset="0.75" stop-color="#f4f4ff"/><stop offset="0.7842" stop-color="#ffffff"/><stop offset="0.875" stop-color="#ffe3e3"/><stop offset="1" stop-color="#ffbcbc"/></linearGradient><linearGradient id="g151"><stop offset="0" stop-color="#0000ff"/><stop offset="0.125" stop-color="#2b2bff"/><stop offset="0.25" stop-color="#5454ff"/><stop offset="0.375" stop-color="#7c7cff"/><stop offset="0.5" stop-color="#a3a3ff"/><stop offset="0.625" stop-color="#cacaff"/><stop offset="0.75" stop-color="#f1f1ff"/><stop offset="0.797" stop-color="#ffffff"/><stop offset="0.875" stop-color="#ffe7e7"/><stop offset="1" stop-color="#ffc1c1"/></linearGradient><linearGradient id="g152"><stop offset="0" stop-color="#0000ff"/><stop offset="0.125" stop-color="#2b2bff"/><stop offset="0.25" stop-color="#5353ff"/><stop offset="0.375" stop-color="#7a7aff"/><stop offset="0.5" stop-color="#a1a1ff"/><stop offset="0.625" stop-color="#c7c7ff"/><stop offset="0.75" stop-color="#ededff"/><stop offset="0.8104" stop-color="#ffffff"/><stop offset="0.875" stop-color="#ffecec"/><stop offset="1" stop-color="#ffc6c6"/></linearGradient><linearGradient id="g153"><stop offset="0" stop-color="#0000ff"/><stop offset="0.125" stop-color="#2a2aff"/><stop offset="0.25" stop-color="#5252ff"/><stop offset="0.375" stop-color="#7878ff"/><stop offset="0.5" stop-color="#9e9eff"/><stop offset="0.625" stop-color="#c4c4ff"/><stop offset="0.75" stop-color="#e9e9ff"/><stop offset="0.8245" stop-color="#ffffff"/><stop offset="0.875" stop-color="#fff0f0"/><stop offset="1" stop-color="#ffcbcb"/></linearGradient><linearGradient id="g154"><stop offset="0" stop-color="#0000ff"/><stop offset="0.125" stop-color="#2a2aff"/><stop offset="0.25" stop-color="#5050ff"/><stop offset="0.375" stop-color="#7676ff"/><stop offset="0.5" stop-color="#9c9cff"/><stop offset="0.625" stop-color="#c1c1ff"/><stop offset="0.75" stop-color="#e5e5ff"/><stop offset="0.8392" stop-color="#ffffff"/><stop offset="0.875" stop-color="#fff5f5"/><stop offset="1" stop-color="#ffd1d1"/></linearGradient><linearGradient id="g155"><stop offset="0" stop-color="#0000ff"/><stop offset="0.125" stop-color="#2929ff"/><stop offset="0.25" stop-color="#4f4fff"/><stop offset="0.375" stop-color="#7575ff"/><stop offset="0.5" stop-color="#9999ff"/><stop offset="0.625" stop-color="#bdbdff"/><stop offset="0.75" stop-color="#e1e1ff"/><stop offset="0.8546" stop-color="#ffffff"/><stop offset="0.875" stop-color="#fff9f9"/><stop offset="1" stop-color="#ffd6d6"/></linearGradient><linearGradient id="g156"><stop offset="0" stop-color="#0000ff"/><stop offset="0.125" stop-color="#2929ff"/><stop offset="0.25" stop-color="#4e4eff"/><stop offset="0.375" stop-color="#7373ff"/><stop offset="0.5" stop-color="#9797ff"/><stop offset="0.625" stop-color="#babaff"/><stop offset="0.75" stop-color="#ddddff"/><stop offset="0.8707" stop-color="#ffffff"/><stop offset="0.875" stop-color="#fffefe"/><stop offset="1" stop-color="#ffdbdb"/></linearGradient><linearGradient id="g157"><stop offset="0" stop-color="#0000ff"/><stop offset="0.125" stop-color="#2828ff"/><stop offset="0.25" stop-color="#4d4dff"/><stop offset="0.375" stop-color="#7171ff"/><stop offset="0.5" stop-color="#9494ff"/><stop offset="0.625" stop-color="#b7b7ff"/><stop offset="0.75" stop-color="#dadaff"/><stop offset="0.875" stop-color="#fcfcff"/><stop offset="0.8877" stop-color="#ffffff"/><stop offset="1" stop-color="#ffe1e1"/></linearGradient><linearGradient id="g158"><stop offset="0" stop-color="#0000ff"/><stop offset="0.125" stop-color="#2828ff"/><stop offset="0.25" stop-color="#4c4cff"/><stop offset="0.375" stop-color="#6f6fff"/><stop offset="0.5" stop-color="#9292ff"/><stop offset="0.625" stop-color="#b4b4ff"/><stop offset="0.75" stop-color="#d6d6ff"/><stop offset="0.875" stop-color="#f7f7ff"/><stop offset="0.9055" stop-color="#ffffff"/><stop offset="1" stop-color="#ffe6e6"/></linearGradient><linearGradient id="g159"><stop offset="0" stop-color="#0000ff"/><stop offset="0.125" stop-color="#2727ff"/><stop offset="0.25" stop-color="#4b4bff"/><stop offset="0.375" stop-color="#6e6eff"/><stop offset="0.5" stop-color="#8f8fff"/><stop offset="0.625" stop-color="#b1b1ff"/><stop offset="0.75" stop-color="#d2d2ff"/><stop offset="0.875" stop-color="#f2f2ff"/><stop offset="0.9243" stop-color="#ffffff"/><stop offset="1" stop-color="#ffebeb"/></linearGradient><linearGradient id="g160"><stop offset="0" stop-color="#0000ff"/><stop offset="0.125" stop-color="#2727ff"/><stop offset="0.25" stop-color="#4a4aff"/><stop offset="0.375" stop-color="#6c6cff"/><stop offset="0.5" stop-color="#8d8dff"/><stop offset="0.625" stop-color="#aeaeff"/><stop offset="0.75" stop-color="#ceceff"/><stop offset="0.875" stop-color="#eeeeff"/><stop offset="0.9441" stop-color="#ffffff"/><stop offset="1" stop-color="#fff1f1"/></linearGradient><linearGradient id="g161"><stop offset="0" stop-color="#0000ff"/><stop offset="0.125" stop-color="#2626ff"/><stop offset="0.25" stop-color="#4949ff"/><stop offset="0.375" stop-color="#6a6aff"/><stop offset="0.5" stop-color="#8a8aff"/><stop offset="0.625" stop-color="#aaaaff"/><stop offset="0.75" stop-color="#cacaff"/><stop offset="0.875" stop-color="#e9e9ff"/><stop offset="0.9649" stop-color="#ffffff"/><stop offset="1" stop-color="#fff6f6"/></linearGradient><linearGradient id="g162"><stop offset="0" stop-color="#0000ff"/><stop offset="0.125" stop-color="#2626ff"/><stop offset="0.25" stop-color="#4848ff"/><stop offset="0.375" stop-color="#6868ff"/><stop offset="0.5" stop-color="#8888ff"/><stop offset="0.625" stop-color="#a7a7ff"/><stop offset="0.75" stop-color="#c6c6ff"/><stop offset="0.875" stop-color="#e4e4ff"/><stop offset="0.9869" stop-color="#ffffff"/><stop offset="1" stop-color="#fffcfc"/></linearGradient><linearGradient id="g163"><stop offset="0" stop-color="#0000ff"/><stop offset="0.125" stop-color="#2525ff"/><stop offset="0.25" stop-color="#4646ff"/><stop offset="0.375" stop-color="#6666ff"/><stop offset="0.5" stop-color="#8585ff"/><stop offset="0.625" stop-color="#a4a4ff"/><stop offset="0.75" stop-color="#c2c2ff"/><stop offset="0.875" stop-color="#dfdfff"/><stop offset="1" stop-color="#fdfdff"/></linearGradient><linearGradient id="g164"><stop offset="0" stop-color="#0000ff"/><stop offset="0.125" stop-color="#2525ff"/><stop offset="0.25" stop-color="#4545ff"/><stop offset="0.375" stop-color="#6464ff"/><stop offset="0.5" stop-color="#8383ff"/><stop offset="0.625" stop-color="#a1a1ff"/><stop offset="0.75" stop-color="#bebeff"/><stop offset="0.875" stop-color="#dbdbff"/><stop offset="1" stop-color="#f7f7ff"/></linearGradient><linearGradient id="g165"><stop offset="0" stop-color="#0000ff"/><stop offset="0.125" stop-color="#2424ff"/><stop offset="0.25" stop-color="#4444ff"/><stop offset="0.375" stop-color="#6363ff"/><stop offset="0.5" stop-color="#8080ff"/><stop offset="0.625" stop-color="#9d9dff"/><stop offset="0.75" stop-color="#babaff"/><stop offset="0.875" stop-color="#d6d6ff"/><stop offset="1" stop-color="#f2f2ff"/></linearGradient><linearGradient id="g166"><stop offset="0" stop-color="#0000ff"/><stop offset="0.125" stop-color="#2424ff"/><stop offset="0.25" stop-color="#4343ff"/><stop offset="0.375" stop-color="#6161ff"/><stop offset="0.5" stop-color="#7e7eff"/><stop offset="0.625" stop-color="#9a9aff"/><stop offset="0.75" stop-color="#b6b6ff"/><stop offset="0.875" stop-color="#d1d1ff"/><stop offset="1" stop-color="#ececff"/></linearGradient><linearGradient id="g167"><stop offset="0" stop-color="#0000ff"/><stop offset="0.125" stop-color="#2323ff"/><stop offset="0.25" stop-color="#4242ff"/><stop offset="0.375" stop-color="#5f5fff"/><stop offset="0.5" stop-color="#7b7bff"/><stop offset="0.625" stop-color="#9797ff"/><stop offset="0.75" stop-color="#b2b2ff"/><stop offset="0.875" stop-color="#ccccff"/><stop offset="1" stop-color="#e6e6ff"/></linearGradient><linearGradient id="g168"><stop offset="0" stop-color="#0000ff"/><stop offset="0.125" stop-color="#2323ff"/><stop offset="0.25" stop-color="#4141ff"/><stop offset="0.375" stop-color="#5d5dff"/><stop offset="0.5" stop-color="#7979ff"/><stop offset="0.625" stop-color="#9393ff"/><stop offset="0.75" stop-color="#aeaeff"/><stop offset="0.875" stop-color="#c7c7ff"/><stop offset="1" stop-color="#e1e1ff"/></linearGradient><linearGradient id="g169"><stop offset="0" stop-color="#0000ff"/><stop offset="0.125" stop-color="#2222ff"/><stop offset="0.25" stop-color="#3f3fff"/><stop offset="0.375" stop-color="#5b5bff"/><stop offset="0.5" stop-color="#7676ff"/><stop offset="0.625" stop-color="#9090ff"/><stop offset="0.75" stop-color="#aaaaff"/><stop offset="0.875" stop-color="#c3c3ff"/><stop offset="1" stop-color="#dbdbff"/></linearGradient><linearGradient id="g170"><stop offset="0" stop-color="#0000ff"/><stop offset="0.125" stop-color="#2222ff"/><stop offset="0.25" stop-color="#3e3eff"/><stop offset="0.375" stop-color="#5959ff"/><stop offset="0.5" stop-color="#7373ff"/><stop offset="0.625" stop-color="#8d8dff"/><stop offset="0.75" stop-color="#a6a6ff"/><stop offset="0.875" stop-color="#bebeff"/><stop offset="1" stop-color="#d6d6ff"/></linearGradient><linearGradient id="g171"><stop offset="0" stop-color="#0000ff"/><stop offset="0.125" stop-color="#2121ff"/><stop offset="0.25" stop-color="#3d3dff"/><stop offset="0.375" stop-color="#5757ff"/><stop offset="0.5" stop-color="#7171ff"/><stop offset="0.625" stop-color="#8989ff"/><stop offset="0.75" stop-color="#a1a1ff"/><stop offset="0.875" stop-color="#b9b9ff"/><stop offset="1" stop-color="#d0d0ff"/></linearGradient><linearGradient id="g172"><stop offset="0" stop-color="#0000ff"/><stop offset="0.125" stop-color="#2121ff"/><stop offset="0.25" stop-color="#3c3cff"/><stop offset="0.375" stop-color="#5656ff"/><stop offset="0.5" stop-color="#6f6fff"/><stop offset="0.625" stop-color="#8787ff"/><stop offset="0.75" stop-color="#9f9fff"/><stop offset="0.875" stop-color="#b6b6ff"/><stop offset="1" stop-color="#cdcdff"/></linearGradient></defs>
<g><rect x="443.5" y="133.0" width="196.30" height="2.30" fill="url(#g0)"/><rect x="443.5" y="135.0" width="196.56" height="2.30" fill="url(#g1)"/><rect x="443.5" y="137.0" width="196.82" height="2.30" fill="url(#g2)"/><rect x="443.5" y="139.0" width="197.07" height="2.30" fill="url(#g3)"/><rect x="443.5" y="141.0" width="197.33" height="2.30" fill="url(#g4)"/><rect x="443.5" y="143.0" width="197.59" height="2.30" fill="url(#g5)"/><rect x="443.5" y="145.0" width="197.85" height="2.30" fill="url(#g6)"/><rect x="443.5" y="147.0" width="198.10" height="2.30" fill="url(#g7)"/><rect x="443.5" y="149.0" width="198.36" height="2.30" fill="url(#g8)"/><rect x="443.5" y="151.0" width="198.62" height="2.30" fill="url(#g9)"/><rect x="443.5" y="153.0" width="198.87" height="2.30" fill="url(#g10)"/><rect x="443.5" y="155.0" width="199.12" height="2.30" fill="url(#g11)"/><rect x="443.5" y="157.0" width="199.38" height="2.30" fill="url(#g12)"/><rect x="443.5" y="159.0" width="199.63" height="2.30" fill="url(#g13)"/><rect x="443.5" y="161.0" width="199.88" height="2.30" fill="url(#g14)"/><rect x="443.5" y="163.0" width="200.13" height="2.30" fill="url(#g15)"/><rect x="443.5" y="165.0" width="200.38" height="2.30" fill="url(#g16)"/><rect x="443.5" y="167.0" width="200.62" height="2.30" fill="url(#g17)"/><rect x="443.5" y="169.0" width="200.87" height="2.30" fill="url(#g18)"/><rect x="443.5" y="171.0" width="201.11" height="2.30" fill="url(#g19)"/><rect x="443.5" y="173.0" width="201.36" height="2.30" fill="url(#g20)"/><rect x="443.5" y="175.0" width="201.60" height="2.30" fill="url(#g21)"/><rect x="443.5" y="177.0" width="201.83" height="2.30" fill="url(#g22)"/><rect x="443.5" y="179.0" width="202.07" height="2.30" fill="url(#g23)"/><rect x="443.5" y="181.0" width="202.31" height="2.30" fill="url(#g24)"/><rect x="443.5" y="183.0" width="202.54" height="2.30" fill="url(#g25)"/><rect x="443.5" y="185.0" width="202.77" height="2.30" fill="url(#g26)"/><rect x="443.5" y="187.0" width="203.00" height="2.30" fill="url(#g27)"/><rect x="443.5" y="189.0" width="203.22" height="2.30" fill="url(#g28)"/><rect x="443.5" y="191.0" width="203.45" height="2.30" fill="url(#g29)"/><rect x="443.5" y="193.0" width="203.67" height="2.30" fill="url(#g30)"/><rect x="443.5" y="195.0" width="203.89" height="2.30" fill="url(#g31)"/><rect x="443.5" y="197.0" width="204.10" height="2.30" fill="url(#g32)"/><rect x="443.5" y="199.0" width="204.32" height="2.30" fill="url(#g33)"/><rect x="443.5" y="201.0" width="204.53" height="2.30" fill="url(#g34)"/><rect x="443.5" y="203.0" width="204.73" height="2.30" fill="url(#g35)"/><rect x="443.5" y="205.0" width="204.94" height="2.30" fill="url(#g36)"/><rect x="443.5" y="207.0" width="205.14" height="2.30" fill="url(#g37)"/><rect x="443.5" y="209.0" width="205.34" height="2.30" fill="url(#g38)"/><rect x="443.5" y="211.0" width="205.54" height="2.30" fill="url(#g39)"/><rect x="443.5" y="213.0" width="205.73" height="2.30" fill="url(#g40)"/><rect x="443.5" y="215.0" width="205.92" height="2.30" fill="url(#g41)"/><rect x="443.5" y="217.0" width="206.11" height="2.30" fill="url(#g42)"/><rect x="443.5" y="219.0" width="206.29" height="2.30" fill="url(#g43)"/><rect x="443.5" y="221.0" width="206.47" height="2.30" fill="url(#g44)"/><rect x="443.5" y="223.0" width="206.65" height="2.30" fill="url(#g45)"/><rect x="443.5" y="225.0" width="206.82" height="2.30" fill="url(#g46)"/><rect x="443.5" y="227.0" width="206.99" height="2.30" fill="url(#g47)"/><rect x="443.5" y="229.0" width="207.16" height="2.30" fill="url(#g48)"/><rect x="443.5" y="231.0" width="207.32" height="2.30" fill="url(#g49)"/><rect x="443.5" y="233.0" width="207.48" height="2.30" fill="url(#g50)"/><rect x="443.5" y="235.0" width="207.63" height="2.30" fill="url(#g51)"/><rect x="443.5" y="237.0" width="207.78" height="2.30" fill="url(#g52)"/><rect x="443.5" y="239.0" width="207.93" height="2.30" fill="url(#g53)"/><rect x="443.5" y="241.0" width="208.07" height="2.30" fill="url(#g54)"/><rect x="443.5" y="243.0" width="208.21" height="2.30" fill="url(#g55)"/><rect x="443.5" y="245.0" width="208.35" height="2.30" fill="url(#g56)"/><rect x="443.5" y="247.0" width="208.48" height="2.30" fill="url(#g57)"/><rect x="443.5" y="249.0" width="208.61" height="2.30" fill="url(#g58)"/><rect x="443.5" y="251.0" width="208.73" height="2.30" fill="url(#g59)"/><rect x="443.5" y="253.0" width="208.85" height="2.30" fill="url(#g60)"/><rect x="443.5" y="255.0" width="208.96" height="2.30" fill="url(#g61)"/><rect x="443.5" y="257.0" width="209.07" height="2.30" fill="url(#g62)"/><rect x="443.5" y="259.0" width="209.18" height="2.30" fill="url(#g63)"/><rect x="443.5" y="261.0" width="209.28" height="2.30" fill="url(#g64)"/><rect x="443.5" y="263.0" width="209.38" height="2.30" fill="url(#g65)"/><rect x="443.5" y="265.0" width="209.47" height="2.30" fill="url(#g66)"/><rect x="443.5" y="267.0" width="209.56" height="2.30" fill="url(#g67)"/><rect x="443.5" y="269.0" width="209.64" height="2.30" fill="url(#g68)"/><rect x="443.5" y="271.0" width="209.72" height="2.30" fill="url(#g69)"/><rect x="443.5" y="273.0" width="209.80" height="2.30" fill="url(#g70)"/><rect x="443.5" y="275.0" width="209.87" height="2.30" fill="url(#g71)"/><rect x="443.5" y="277.0" width="209.93" height="2.30" fill="url(#g72)"/><rect x="443.5" y="279.0" width="210.00" height="2.30" fill="url(#g73)"/><rect x="443.5" y="281.0" width="210.05" height="2.30" fill="url(#g74)"/><rect x="443.5" y="283.0" width="210.10" height="2.30" fill="url(#g75)"/><rect x="443.5" y="285.0" width="210.15" height="2.30" fill="url(#g76)"/><rect x="443.5" y="287.0" width="210.19" height="2.30" fill="url(#g77)"/><rect x="443.5" y="289.0" width="210.23" height="2.30" fill="url(#g78)"/><rect x="443.5" y="291.0" width="210.27" height="2.30" fill="url(#g79)"/><rect x="443.5" y="293.0" width="210.30" height="2.30" fill="url(#g80)"/><rect x="443.5" y="295.0" width="210.32" height="2.30" fill="url(#g81)"/><rect x="443.5" y="297.0" width="210.34" height="2.30" fill="url(#g82)"/><rect x="443.5" y="299.0" width="210.35" height="2.30" fill="url(#g83)"/><rect x="443.5" y="301.0" width="210.36" height="2.30" fill="url(#g84)"/><rect x="443.5" y="303.0" width="210.37" height="2.30" fill="url(#g85)"/><rect x="443.5" y="305.0" width="210.37" height="2.30" fill="url(#g86)"/><rect x="443.5" y="307.0" width="210.37" height="2.30" fill="url(#g87)"/><rect x="443.5" y="309.0" width="210.36" height="2.30" fill="url(#g88)"/><rect x="443.5" y="311.0" width="210.34" height="2.30" fill="url(#g89)"/><rect x="443.5" y="313.0" width="210.32" height="2.30" fill="url(#g90)"/><rect x="443.5" y="315.0" width="210.30" height="2.30" fill="url(#g91)"/><rect x="443.5" y="317.0" width="210.27" height="2.30" fill="url(#g92)"/><rect x="443.5" y="319.0" width="210.24" height="2.30" fill="url(#g93)"/><rect x="443.5" y="321.0" width="210.20" height="2.30" fill="url(#g94)"/><rect x="443.5" y="323.0" width="210.16" height="2.30" fill="url(#g95)"/><rect x="443.5" y="325.0" width="210.12" height="2.30" fill="url(#g96)"/><rect x="443.5" y="327.0" width="210.07" height="2.30" fill="url(#g97)"/><rect x="443.5" y="329.0" width="210.01" height="2.30" fill="url(#g98)"/><rect x="443.5" y="331.0" width="209.95" height="2.30" fill="url(#g99)"/><rect x="443.5" y="333.0" width="209.88" height="2.30" fill="url(#g100)"/><rect x="443.5" y="335.0" width="209.82" height="2.30" fill="url(#g101)"/><rect x="443.5" y="337.0" width="209.74" height="2.30" fill="url(#g102)"/><rect x="443.5" y="339.0" width="209.66" height="2.30" fill="url(#g103)"/><rect x="443.5" y="341.0" width="209.58" height="2.30" fill="url(#g104)"/><rect x="443.5" y="343.0" width="209.49" height="2.30" fill="url(#g105)"/><rect x="443.5" y="345.0" width="209.40" height="2.30" fill="url(#g106)"/><rect x="443.5" y="347.0" width="209.30" height="2.30" fill="url(#g107)"/><rect x="443.5" y="349.0" width="209.20" height="2.30" fill="url(#g108)"/><rect x="443.5" y="351.0" width="209.10" height="2.30" fill="url(#g109)"/><rect x="443.5" y="353.0" width="208.99" height="2.30" fill="url(#g110)"/><rect x="443.5" y="355.0" width="208.88" height="2.30" fill="url(#g111)"/><rect x="443.5" y="357.0" width="208.76" height="2.30" fill="url(#g112)"/><rect x="443.5" y="359.0" width="208.64" height="2.30" fill="url(#g113)"/><rect x="443.5" y="361.0" width="208.51" height="2.30" fill="url(#g114)"/><rect x="443.5" y="363.0" width="208.38" height="2.30" fill="url(#g115)"/><rect x="443.5" y="365.0" width="208.25" height="2.30" fill="url(#g116)"/><rect x="443.5" y="367.0" width="208.11" height="2.30" fill="url(#g117)"/><rect x="443.5" y="369.0" width="207.97" height="2.30" fill="url(#g118)"/><rect x="443.5" y="371.0" width="207.82" height="2.30" fill="url(#g119)"/><rect x="443.5" y="373.0" width="207.67" height="2.30" fill="url(#g120)"/><rect x="443.5" y="375.0" width="207.52" height="2.30" fill="url(#g121)"/><rect x="443.5" y="377.0" width="207.36" height="2.30" fill="url(#g122)"/><rect x="443.5" y="379.0" width="207.20" height="2.30" fill="url(#g123)"/><rect x="443.5" y="381.0" width="207.03" height="2.30" fill="url(#g124)"/><rect x="443.5" y="383.0" width="206.86" height="2.30" fill="url(#g125)"/><rect x="443.5" y="385.0" width="206.69" height="2.30" fill="url(#g126)"/><rect x="443.5" y="387.0" width="206.51" height="2.30" fill="url(#g127)"/><rect x="443.5" y="389.0" width="206.34" height="2.30" fill="url(#g128)"/><rect x="443.5" y="391.0" width="206.15" height="2.30" fill="url(#g129)"/><rect x="443.5" y="393.0" width="205.97" height="2.30" fill="url(#g130)"/><rect x="443.5" y="395.0" width="205.78" height="2.30" fill="url(#g131)"/><rect x="443.5" y="397.0" width="205.59" height="2.30" fill="url(#g132)"/><rect x="443.5" y="399.0" width="205.39" height="2.30" fill="url(#g133)"/><rect x="443.5" y="401.0" width="205.19" height="2.30" fill="url(#g134)"/><rect x="443.5" y="403.0" width="204.99" height="2.30" fill="url(#g135)"/><rect x="443.5" y="405.0" width="204.79" height="2.30" fill="url(#g136)"/><rect x="443.5" y="407.0" width="204.58" height="2.30" fill="url(#g137)"/><rect x="443.5" y="409.0" width="204.37" height="2.30" fill="url(#g138)"/><rect x="443.5" y="411.0" width="204.16" height="2.30" fill="url(#g139)"/><rect x="443.5" y="413.0" width="203.94" height="2.30" fill="url(#g140)"/><rect x="443.5" y="415.0" width="203.72" height="2.30" fill="url(#g141)"/><rect x="443.5" y="417.0" width="203.50" height="2.30" fill="url(#g142)"/><rect x="443.5" y="419.0" width="203.28" height="2.30" fill="url(#g143)"/><rect x="443.5" y="421.0" width="203.05" height="2.30" fill="url(#g144)"/><rect x="443.5" y="423.0" width="202.83" height="2.30" fill="url(#g145)"/><rect x="443.5" y="425.0" width="202.60" height="2.30" fill="url(#g146)"/><rect x="443.5" y="427.0" width="202.36" height="2.30" fill="url(#g147)"/><rect x="443.5" y="429.0" width="202.13" height="2.30" fill="url(#g148)"/><rect x="443.5" y="431.0" width="201.89" height="2.30" fill="url(#g149)"/><rect x="443.5" y="433.0" width="201.66" height="2.30" fill="url(#g150)"/><rect x="443.5" y="435.0" width="201.42" height="2.30" fill="url(#g151)"/><rect x="443.5" y="437.0" width="201.17" height="2.30" fill="url(#g152)"/><rect x="443.5" y="439.0" width="200.93" height="2.30" fill="url(#g153)"/><rect x="443.5" y="441.0" width="200.69" height="2.30" fill="url(#g154)"/><rect x="443.5" y="443.0" width="200.44" height="2.30" fill="url(#g155)"/><rect x="443.5" y="445.0" width="200.19" height="2.30" fill="url(#g156)"/><rect x="443.5" y="447.0" width="199.94" height="2.30" fill="url(#g157)"/><rect x="443.5" y="449.0" width="199.69" height="2.30" fill="url(#g158)"/><rect x="443.5" y="451.0" width="199.44" height="2.30" fill="url(#g159)"/><rect x="443.5" y="453.0" width="199.19" height="2.30" fill="url(#g160)"/><rect x="443.5" y="455.0" width="198.93" height="2.30" fill="url(#g161)"/><rect x="443.5" y="457.0" width="198.68" height="2.30" fill="url(#g162)"/><rect x="443.5" y="459.0" width="198.42" height="2.30" fill="url(#g163)"/><rect x="443.5" y="461.0" width="198.17" height="2.30" fill="url(#g164)"/><rect x="443.5" y="463.0" width="197.91" height="2.30" fill="url(#g165)"/><rect x="443.5" y="465.0" width="197.65" height="2.30" fill="url(#g166)"/><rect x="443.5" y="467.0" width="197.40" height="2.30" fill="url(#g167)"/><rect x="443.5" y="469.0" width="197.14" height="2.30" fill="url(#g168)"/><rect x="443.5" y="471.0" width="196.88" height="2.30" fill="url(#g169)"/><rect x="443.5" y="473.0" width="196.62" height="2.30" fill="url(#g170)"/><rect x="443.5" y="475.0" width="196.36" height="2.30" fill="url(#g171)"/><rect x="443.5" y="477.0" width="196.20" height="0.80" fill="url(#g172)"/></g>
<rect x="443.5" y="133.4" width="196" height="2.1" fill="#9090ff" opacity=".9"/>
<rect x="443.5" y="474.5" width="196" height="1.2" fill="#a4a4ff"/>
<path d="M443 132.3H653.6" stroke="#a0a0a0" stroke-width="1"/>
<path d="M653.5 132.3V477.4" stroke="#a8a8a8" stroke-width="1"/>
<path d="M443 131.8V477.9" stroke="#dedeee" stroke-width="1.6"/>
<path d="M442.2 477.3H654" stroke="#e6e6e6" stroke-width="1.2"/>
<linearGradient id="lg" x1="0" y1="0" x2="0" y2="1"><stop offset="0" stop-color="#f00"/><stop offset=".5" stop-color="#fff"/><stop offset="1" stop-color="#00f"/></linearGradient>
<rect x="774.8" y="150.1" width="44.5" height="318.6" fill="url(#lg)"/>
<g font-family="'Liberation Sans',sans-serif" font-style="italic" font-size="12.6" fill="#fff" stroke="#fff" stroke-width=".4">
<text x="781.5" y="139.6" textLength="105" lengthAdjust="spacingAndGlyphs">Displacement X</text>
<text x="821.5" y="152.8" textLength="48" lengthAdjust="spacingAndGlyphs">0.00248</text>
<text x="821.5" y="232.7" textLength="48" lengthAdjust="spacingAndGlyphs">0.00186</text>
<text x="821.5" y="312.6" textLength="48" lengthAdjust="spacingAndGlyphs">0.00124</text>
<text x="821.5" y="392.5" textLength="55" lengthAdjust="spacingAndGlyphs">0.000621</text>
<text x="821.5" y="472.4" textLength="26" lengthAdjust="spacingAndGlyphs">0.00</text>
</g>
</svg><!--/VIEW-->

<!--ICONS--><div class="a btn ib" style="left:196.1px"><svg width="15" height="13.5" viewBox="0 0 15 13.5"><path d="M3 5.2h2.6l.8.9H10v1H4.6L3 11z" fill="#d8b800"/><path d="M4.6 6.8H11.6L9.9 11.2H3z" fill="#f4dc28"/><path d="M4.8 8.3h5.6" stroke="#c9ae10" stroke-width=".5"/><rect x="6.3" y="2.2" width="6" height="3.4" rx="1" fill="#1d1d1d"/><rect x="7.2" y="1.6" width="1.8" height="1" fill="#1d1d1d"/><circle cx="10.3" cy="3.6" r=".8" fill="#8a8a9a"/></svg></div>
<div class="a btn ib" style="left:215.1px"><svg width="15" height="13.5" viewBox="0 0 15 13.5"><path d="M3.2 4.2h5.6l1.4 1.4v5.6H3.2z" fill="#1b1b1b"/><rect x="4.6" y="4.6" width="3.4" height="2" fill="#f4f4f4"/><rect x="5" y="8.6" width="3.4" height="2.6" fill="#f4f4f4"/><rect x="5.6" y="9" width="1" height="1.8" fill="#1b1b1b"/><rect x="6.3" y="2.2" width="6" height="3.4" rx="1" fill="#1d1d1d"/><rect x="7.2" y="1.6" width="1.8" height="1" fill="#1d1d1d"/><circle cx="10.3" cy="3.6" r=".8" fill="#8a8a9a"/></svg></div>
<div class="a btn ib" style="left:234.1px"><svg width="15" height="13.5" viewBox="0 0 15 13.5"><rect x="5.1" y="2.2" width="7.2" height="7.0" rx=".8" fill="#fdfdfd" stroke="#555" stroke-width=".5" stroke-linejoin="round"/><polygon points="3.0,4.0 5.1,2.2 12.3,2.2 10.2,4.0" fill="#fdfdfd" stroke="#555" stroke-width=".5" stroke-linejoin="round"/><polygon points="10.2,4.0 12.3,2.2 12.3,9.2 10.2,11.0" fill="#fdfdfd" stroke="#555" stroke-width=".5" stroke-linejoin="round"/><rect x="3.0" y="4.0" width="7.2" height="7.0" rx=".8" fill="#fdfdfd" stroke="#555" stroke-width=".5" stroke-linejoin="round"/><polygon points="3.0,4.0 5.1,2.2 5.1,9.2 3.0,11.0" fill="#14a37c" stroke="#555" stroke-width=".5" stroke-linejoin="round"/></svg></div>
<div class="a btn ib" style="left:253.0px"><svg width="15" height="13.5" viewBox="0 0 15 13.5"><rect x="5.1" y="2.2" width="7.2" height="7.0" rx=".8" fill="#fdfdfd" stroke="#555" stroke-width=".5" stroke-linejoin="round"/><polygon points="3.0,4.0 5.1,2.2 12.3,2.2 10.2,4.0" fill="#fdfdfd" stroke="#555" stroke-width=".5" stroke-linejoin="round"/><polygon points="10.2,4.0 12.3,2.2 12.3,9.2 10.2,11.0" fill="#fdfdfd" stroke="#555" stroke-width=".5" stroke-linejoin="round"/><rect x="3.0" y="4.0" width="7.2" height="7.0" rx=".8" fill="#fdfdfd" stroke="#555" stroke-width=".5" stroke-linejoin="round"/><polygon points="3.0,11.0 5.1,9.2 12.3,9.2 10.2,11.0" fill="#14a37c" stroke="#555" stroke-width=".5" stroke-linejoin="round"/></svg></div>
<div class="a btn ib" style="left:272.0px"><svg width="15" height="13.5" viewBox="0 0 15 13.5"><rect x="5.1" y="2.2" width="7.2" height="7.0" rx=".8" fill="#14a37c" stroke="#555" stroke-width=".5" stroke-linejoin="round"/><path d="M3.0 5.0V11.0H9.2" fill="none" stroke="#555" stroke-width=".5" stroke-linejoin="round"/><rect x="3.4" y="9.5" width="6.2" height="1.0" fill="#fdfdfd" opacity=".9"/></svg></div>
<div class="a btn ib" style="left:290.9px"><svg width="15" height="13.5" viewBox="0 0 15 13.5"><rect x="5.1" y="2.2" width="7.2" height="7.0" rx=".8" fill="#fdfdfd" stroke="#555" stroke-width=".5" stroke-linejoin="round"/><polygon points="3.0,4.0 5.1,2.2 12.3,2.2 10.2,4.0" fill="#fdfdfd" stroke="#555" stroke-width=".5" stroke-linejoin="round"/><polygon points="10.2,4.0 12.3,2.2 12.3,9.2 10.2,11.0" fill="#14a37c" stroke="#555" stroke-width=".5" stroke-linejoin="round"/><rect x="3.0" y="4.0" width="7.2" height="7.0" rx=".8" fill="#fdfdfd" stroke="#555" stroke-width=".5" stroke-linejoin="round"/></svg></div>
<div class="a btn ib" style="left:309.9px"><svg width="15" height="13.5" viewBox="0 0 15 13.5"><rect x="5.1" y="2.2" width="7.2" height="7.0" rx=".8" fill="#fdfdfd" stroke="#555" stroke-width=".5" stroke-linejoin="round"/><polygon points="3.0,4.0 5.1,2.2 12.3,2.2 10.2,4.0" fill="#14a37c" stroke="#555" stroke-width=".5" stroke-linejoin="round"/><polygon points="10.2,4.0 12.3,2.2 12.3,9.2 10.2,11.0" fill="#fdfdfd" stroke="#555" stroke-width=".5" stroke-linejoin="round"/><rect x="3.0" y="4.0" width="7.2" height="7.0" rx=".8" fill="#fdfdfd" stroke="#555" stroke-width=".5" stroke-linejoin="round"/></svg></div>
<div class="a btn ib" style="left:328.8px"><svg width="15" height="13.5" viewBox="0 0 15 13.5"><rect x="5.1" y="2.2" width="7.2" height="7.0" rx=".8" fill="#fdfdfd" stroke="#555" stroke-width=".5" stroke-linejoin="round"/><polygon points="3.0,4.0 5.1,2.2 12.3,2.2 10.2,4.0" fill="#fdfdfd" stroke="#555" stroke-width=".5" stroke-linejoin="round"/><polygon points="10.2,4.0 12.3,2.2 12.3,9.2 10.2,11.0" fill="#fdfdfd" stroke="#555" stroke-width=".5" stroke-linejoin="round"/><rect x="3.0" y="4.0" width="7.2" height="7.0" rx=".8" fill="#14a37c" stroke="#555" stroke-width=".5" stroke-linejoin="round"/></svg></div><!--/ICONS-->

<!--SLIDER--><div class="a" style="left:905.8px;top:101px;width:3.6px;height:411.6px;background:linear-gradient(90deg,#2c7fc0,#3daee9 45%,#3daee9 55%,#2c7fc0);border-radius:1.5px"></div>
<div class="a" style="left:903.6px;top:97.6px;width:8.2px;height:6.8px;background:linear-gradient(#fff,#f6f6f6);border:1px solid #d0d0d0;border-right-color:#b4b4b4;border-radius:1.5px"></div>
<div class="a" style="left:913px;top:100.8px;width:2px;height:1px;background:#cfcfcf"></div><div class="a" style="left:913px;top:141.6px;width:2px;height:1px;background:#cfcfcf"></div><div class="a" style="left:913px;top:182.4px;width:2px;height:1px;background:#cfcfcf"></div><div class="a" style="left:913px;top:223.2px;width:2px;height:1px;background:#cfcfcf"></div><div class="a" style="left:913px;top:264.0px;width:2px;height:1px;background:#cfcfcf"></div><div class="a" style="left:913px;top:304.8px;width:2px;height:1px;background:#cfcfcf"></div><div class="a" style="left:913px;top:345.6px;width:2px;height:1px;background:#cfcfcf"></div><div class="a" style="left:913px;top:386.4px;width:2px;height:1px;background:#cfcfcf"></div><div class="a" style="left:913px;top:427.2px;width:2px;height:1px;background:#cfcfcf"></div><div class="a" style="left:913px;top:468.0px;width:2px;height:1px;background:#cfcfcf"></div><div class="a" style="left:913px;top:508.8px;width:2px;height:1px;background:#cfcfcf"></div><!--/SLIDER-->
<div class="a btn" style="left:347.2px;width:80.2px">Open Curve View</div>
<div class="a btn" style="left:430.6px;width:45px">Center</div>
<div class="a btn" style="left:479.8px;width:59px">Open Report</div>
<div class="a cb" style="left:543px"></div><svg class="a" style="left:543px;top:81.7px" width="8" height="8" viewBox="0 0 8 8"><path d="M1.9 4.1L3.5 6.4L6 2" fill="none" stroke="#222" stroke-width="1.15" stroke-linecap="round" stroke-linejoin="round"/></svg><div class="a lb" style="left:553.5px">Show Legend</div>
<div class="a cb" style="left:618px"></div><div class="a lb" style="left:629px">Show Axes</div>
<div class="a cb" style="left:683px"></div><div class="a lb" style="left:694px">White background</div>
<div class="a cb" style="left:780px"></div><div class="a lb" style="left:791px">Show Cell Edges</div>
<div class="a lb" style="left:869px">Clip:</div>
<div class="a combo" style="left:892.5px;top:79.2px;width:23.2px;height:13.9px;line-height:12px">X<span class="arr" style="top:5px"></span></div>

<div class="a r1" style="left:196px">Time</div>
<div class="a combo" style="left:220.4px;top:516.6px;width:53.2px">1<span class="arr"></span></div>
<div class="a r1" style="left:278px">[s]</div>
<div class="a r1" style="left:292.5px">Variable</div>
<div class="a combo" style="left:331.5px;top:516.6px;width:115.5px">Displacement X<span class="arr"></span></div>
<div class="a r1" style="left:450px">Color Scheme</div>
<div class="a combo" style="left:513px;top:516.6px;width:114.8px">Cold Hot<span class="arr"></span></div>
<div class="a r1" style="left:632px">Distinct Colors</div>
<div class="a inp" style="left:697.3px;top:516.6px;width:109px">256</div>

<div class="a rd" style="left:195.7px;top:538.6px"></div><div class="a" style="left:198.1px;top:541px;width:3px;height:3px;border-radius:50%;background:#222"></div><div class="a r2" style="left:207px">Use natural range</div>
<div class="a rd" style="left:291px;top:538.6px"></div><div class="a r2" style="left:302px">Center around zero</div>
<div class="a rd" style="left:392.5px;top:538.6px"></div><div class="a r2" style="left:403.5px">Use custom range:</div>
<div class="a inp dis" style="left:492px;top:534.9px;width:91px"></div>
<div class="a inp dis" style="left:586.2px;top:534.9px;width:91.2px"></div>
<div class="a r2" style="left:681px">Displacement Scaling</div>
<div class="a inp" style="left:778.2px;top:534.9px;width:91.4px">1000</div>

<!--LOGO--><svg class="a" style="left:6px;top:565.7px" width="20" height="20" viewBox="0 0 20 20">
<rect x="0" y="0" width="19.1" height="18.9" fill="#179c7d"/>
<g fill="#fff">
<path d="M0 5.5L19.1 2v.4L0 6z" opacity=".75"/>
<path d="M0 6.4L19.1 3.2v.6L0 7.3z"/>
<path d="M0 8.7L19.1 4.3v.7L0 9.8z"/>
<path d="M0 13.6L19.1 5.3v1.3L0 15.6z"/>
<path d="M1.9 18.9L19.1 8.2v.6L3 18.9z" opacity=".85"/>
<path d="M4.1 18.9L19.1 9.5v.6L5.2 18.9z" opacity=".85"/>
<path d="M6.6 18.9L19.1 10.6v.5L7.6 18.9z" opacity=".7"/>
</g></svg><!--/LOGO-->
<div class="a" style="left:31px;top:573.2px;font-weight:bold;font-size:11.4px;letter-spacing:.12px;line-height:15px;color:#111">Fraunhofer Cluster</div>
<div class="a" style="left:31px;top:587.3px;font-size:9.6px;line-height:12px;color:#111;-webkit-text-stroke:.25px #111">Programmierbare Materialien</div>
</body></html>
